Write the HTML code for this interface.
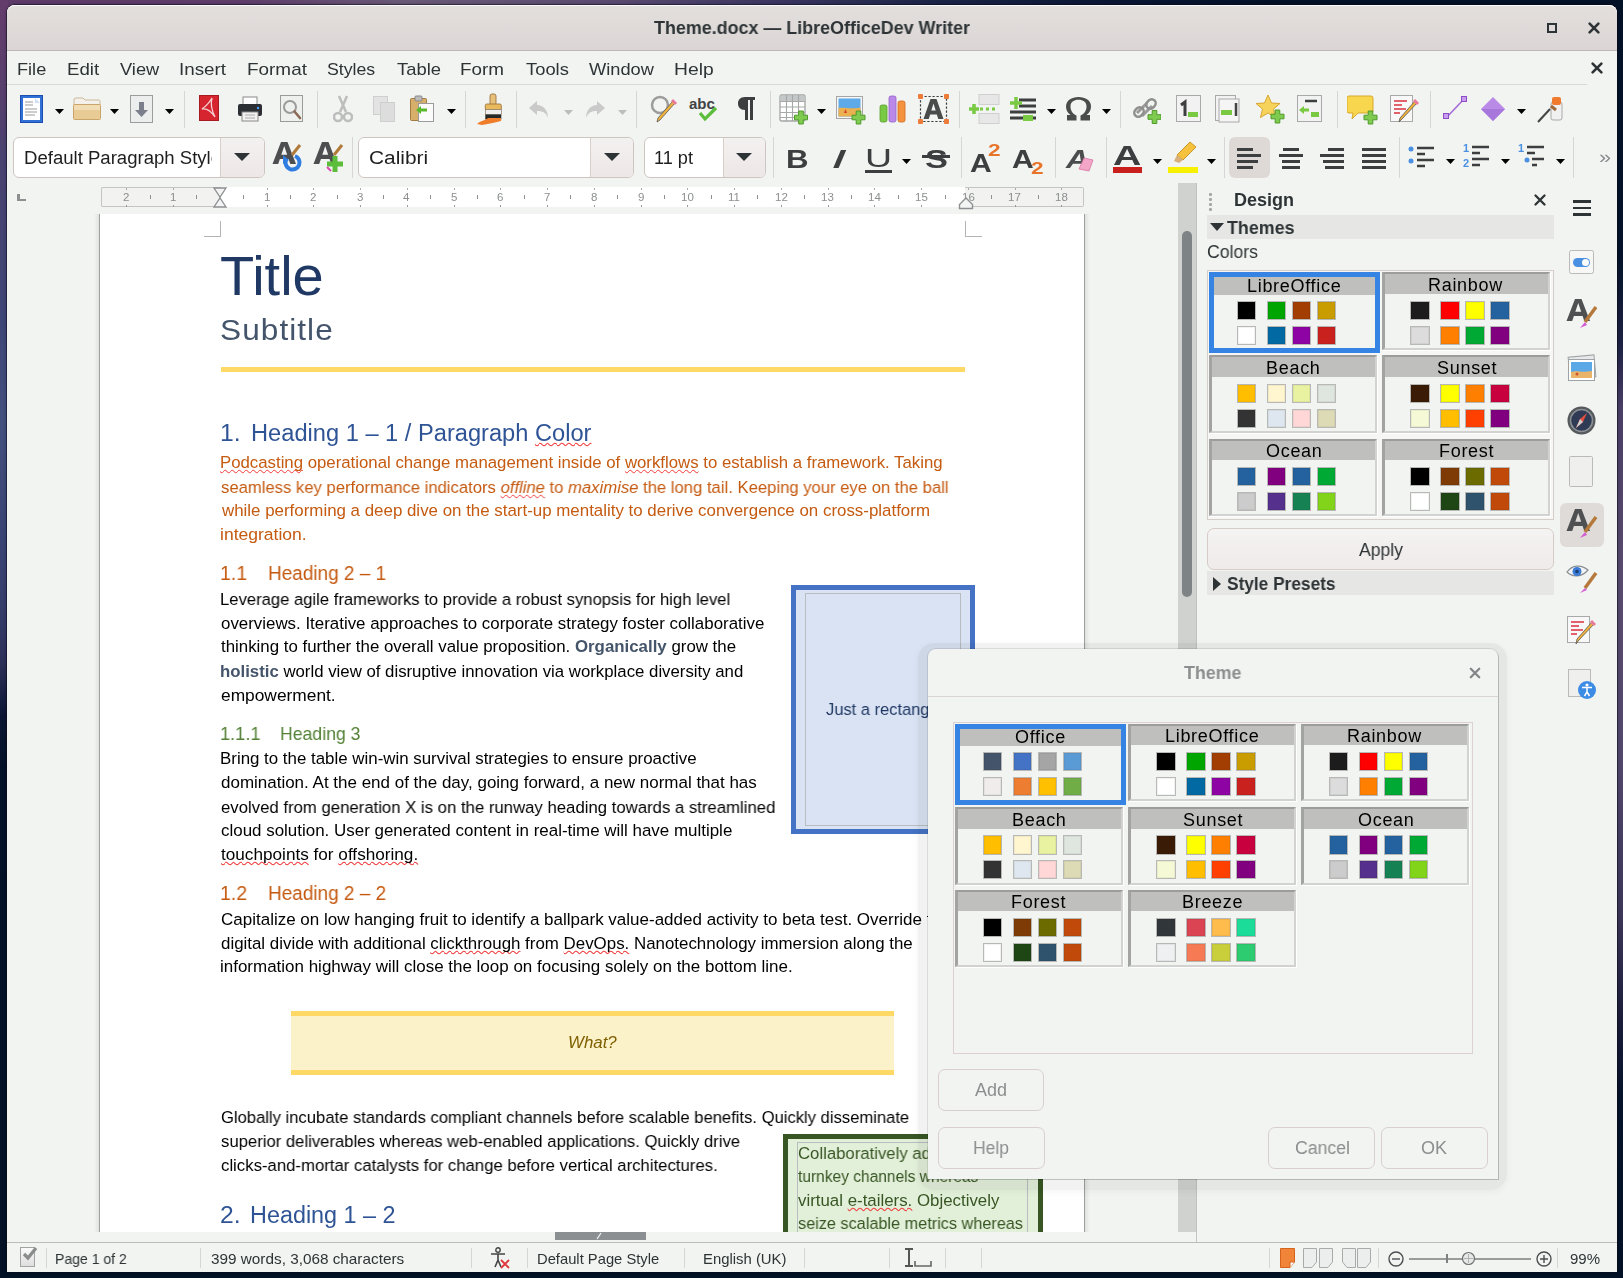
<!DOCTYPE html>
<html><head><meta charset="utf-8"><title>Theme.docx - LibreOfficeDev Writer</title>
<style>
html,body{margin:0;padding:0;}
body{width:1623px;height:1278px;overflow:hidden;position:relative;font-family:'Liberation Sans',sans-serif;}
</style></head><body>
<div style="position:absolute;left:0px;top:0px;width:1623px;height:1278px;background:#021126;"></div>
<div style="position:absolute;left:0px;top:0px;width:1623px;height:8px;background:linear-gradient(90deg,#5d3a68 0%,#5e3d6a 15%,#6a5a78 25%,#5a4a70 38%,#3a3560 48%,#1a2446 58%,#0a1634 68%,#031128 78%,#021126 100%);"></div>
<div style="position:absolute;left:0px;top:0px;width:8px;height:1278px;background:linear-gradient(180deg,#643c6c 0%,#5a3f6c 6%,#4a4270 12%,#3e4676 25%,#44507e 33%,#3a4474 42%,#353c6a 48%,#2c2f58 52%,#0c1634 56%,#031128 60%,#021126 100%);"></div>
<div style="position:absolute;left:1616px;top:0px;width:7px;height:1278px;background:linear-gradient(180deg,#021126 0%,#04132a 20%,#1e2244 27%,#4a3f66 32%,#574a6e 45%,#51476c 60%,#3b3558 72%,#1a1c3a 80%,#05122a 86%,#021126 100%);"></div>
<div style="position:absolute;left:7px;top:5px;width:1610px;height:1267px;background:#f2f4f1;border-radius:8px 8px 0 0;box-shadow:0 0 0 1px rgba(10,8,30,0.45),0 0 3px 1px rgba(0,0,0,0.25);"></div>
<div style="position:absolute;left:7px;top:5px;width:1610px;height:45px;background:linear-gradient(180deg,#e3dfdd 0%,#dbd6d5 100%);border-radius:8px 8px 0 0;box-shadow:inset 0 1px 0 #fbfafa;"></div>
<div style="position:absolute;left:7px;top:50px;width:1610px;height:1px;background:#bfb7b1;"></div>
<div style="position:absolute;left:654.00px;top:19.00px;font-family:'Liberation Sans', sans-serif;font-size:18px;line-height:18px;color:#2e3436;font-weight:700;font-style:normal;white-space:pre;transform:scaleX(0.9945);transform-origin:0 0;will-change:transform;">Theme.docx — LibreOfficeDev Writer</div>
<div style="position:absolute;left:1547px;top:23px;width:10px;height:10px;border:2px solid #2e3436;box-sizing:border-box;"></div>
<svg style="position:absolute;left:1587px;top:21px" width="14" height="14" viewBox="0 0 14 14"><path d="M2.6 2.6 L11.4 11.4 M11.4 2.6 L2.6 11.4" stroke="#2e3436" stroke-width="2.6" stroke-linecap="round"/></svg>
<div style="position:absolute;left:17.43px;top:61.00px;font-family:'Liberation Sans', sans-serif;font-size:17px;line-height:17px;color:#2e3436;font-weight:400;font-style:normal;white-space:pre;transform:scaleX(1.0674);transform-origin:0 0;will-change:transform;">File</div>
<div style="position:absolute;left:67.30px;top:61.00px;font-family:'Liberation Sans', sans-serif;font-size:17px;line-height:17px;color:#2e3436;font-weight:400;font-style:normal;white-space:pre;transform:scaleX(1.0989);transform-origin:0 0;will-change:transform;">Edit</div>
<div style="position:absolute;left:120.00px;top:61.00px;font-family:'Liberation Sans', sans-serif;font-size:17px;line-height:17px;color:#2e3436;font-weight:400;font-style:normal;white-space:pre;transform:scaleX(1.0732);transform-origin:0 0;will-change:transform;">View</div>
<div style="position:absolute;left:179.29px;top:61.00px;font-family:'Liberation Sans', sans-serif;font-size:17px;line-height:17px;color:#2e3436;font-weight:400;font-style:normal;white-space:pre;transform:scaleX(1.1074);transform-origin:0 0;will-change:transform;">Insert</div>
<div style="position:absolute;left:246.59px;top:61.00px;font-family:'Liberation Sans', sans-serif;font-size:17px;line-height:17px;color:#2e3436;font-weight:400;font-style:normal;white-space:pre;transform:scaleX(1.1126);transform-origin:0 0;will-change:transform;">Format</div>
<div style="position:absolute;left:327.30px;top:61.00px;font-family:'Liberation Sans', sans-serif;font-size:17px;line-height:17px;color:#2e3436;font-weight:400;font-style:normal;white-space:pre;transform:scaleX(1.0416);transform-origin:0 0;will-change:transform;">Styles</div>
<div style="position:absolute;left:396.50px;top:61.00px;font-family:'Liberation Sans', sans-serif;font-size:17px;line-height:17px;color:#2e3436;font-weight:400;font-style:normal;white-space:pre;transform:scaleX(1.0825);transform-origin:0 0;will-change:transform;">Table</div>
<div style="position:absolute;left:460.49px;top:61.00px;font-family:'Liberation Sans', sans-serif;font-size:17px;line-height:17px;color:#2e3436;font-weight:400;font-style:normal;white-space:pre;transform:scaleX(1.1088);transform-origin:0 0;will-change:transform;">Form</div>
<div style="position:absolute;left:525.70px;top:61.00px;font-family:'Liberation Sans', sans-serif;font-size:17px;line-height:17px;color:#2e3436;font-weight:400;font-style:normal;white-space:pre;transform:scaleX(1.0794);transform-origin:0 0;will-change:transform;">Tools</div>
<div style="position:absolute;left:589.30px;top:61.00px;font-family:'Liberation Sans', sans-serif;font-size:17px;line-height:17px;color:#2e3436;font-weight:400;font-style:normal;white-space:pre;transform:scaleX(1.0737);transform-origin:0 0;will-change:transform;">Window</div>
<div style="position:absolute;left:674.37px;top:61.00px;font-family:'Liberation Sans', sans-serif;font-size:17px;line-height:17px;color:#2e3436;font-weight:400;font-style:normal;white-space:pre;transform:scaleX(1.1338);transform-origin:0 0;will-change:transform;">Help</div>
<svg style="position:absolute;left:1590px;top:61px" width="14" height="14" viewBox="0 0 14 14"><path d="M2.6 2.6 L11.4 11.4 M11.4 2.6 L2.6 11.4" stroke="#2e3436" stroke-width="2.6" stroke-linecap="round"/></svg>
<div style="position:absolute;left:7px;top:84px;width:1580px;height:1px;background:#d9dad8;"></div>
<svg style="position:absolute;left:20px;top:95px" width="23" height="28" viewBox="0 0 23 28"><rect x="0.5" y="0.5" width="22" height="27" fill="#2f6fd6" stroke="#1d4fb0"/><rect x="3" y="3" width="17" height="22" fill="#fff"/><path d="M15 3 L20 8 L15 8 Z" fill="#cfe0f7"/><g stroke="#9a9a9a" stroke-width="1.2"><path d="M5 7H13M5 10H13M5 14H17M5 17H17M5 20H15"/></g></svg>
<svg style="position:absolute;left:54.5px;top:108.5px" width="9" height="6" viewBox="0 0 9 6"><path d="M0 0 L9 0 L4.5 5 Z" fill="#000"/></svg>
<svg style="position:absolute;left:73px;top:97px" width="28" height="24" viewBox="0 0 28 24"><path d="M1 3 Q1 1 3 1 L10 1 L12 3 L26 3 Q27 3 27 5 L27 8 L1 8 Z" fill="#f4f1ea" stroke="#c9b99a" stroke-width="1"/><rect x="0.5" y="7.5" width="27" height="15" rx="1" fill="#e9cc95" stroke="#caa468"/><rect x="1" y="8" width="26" height="5" fill="#f2dcb4"/></svg>
<svg style="position:absolute;left:109.5px;top:108.5px" width="9" height="6" viewBox="0 0 9 6"><path d="M0 0 L9 0 L4.5 5 Z" fill="#000"/></svg>
<svg style="position:absolute;left:130px;top:95px" width="23" height="28" viewBox="0 0 23 28"><rect x="0.5" y="0.5" width="22" height="27" fill="#eceeed" stroke="#9c9c9c"/><path d="M9 7 H14 V15 H18 L11.5 22 L5 15 H9 Z" fill="#7b7f8c"/></svg>
<svg style="position:absolute;left:164.5px;top:108.5px" width="9" height="6" viewBox="0 0 9 6"><path d="M0 0 L9 0 L4.5 5 Z" fill="#000"/></svg>
<div style="position:absolute;left:184px;top:91px;width:1px;height:37px;background:#d6d7d5;"></div>
<svg style="position:absolute;left:199px;top:95px" width="20" height="26" viewBox="0 0 20 26"><rect x="0.5" y="0.5" width="19" height="25" fill="#d6252f" stroke="#a81a22"/><path d="M13 3 C10 8 6 12 3 14 C8 13 12 16 16 22 C13 16 11 10 13 3 Z" fill="none" stroke="#f6d2d3" stroke-width="1.3"/></svg>
<svg style="position:absolute;left:237px;top:96px" width="26" height="26" viewBox="0 0 26 26"><rect x="6" y="1" width="14" height="9" fill="#fff" stroke="#8a8a8a"/><rect x="1" y="8" width="24" height="12" rx="2" fill="#2c2f33"/><rect x="5" y="16" width="16" height="9" fill="#f2f2f2" stroke="#8a8a8a"/><circle cx="21" cy="12" r="1.2" fill="#4aa3ff"/><path d="M8 19H18M8 22H18" stroke="#aaa"/></svg>
<svg style="position:absolute;left:280px;top:95px" width="24" height="28" viewBox="0 0 24 28"><rect x="0.5" y="0.5" width="22" height="26" fill="#eef0ee" stroke="#9b9b9b"/><circle cx="10" cy="12" r="6" fill="none" stroke="#9a9a9a" stroke-width="2"/><path d="M14.5 16.5 L20 23" stroke="#8a6a52" stroke-width="2.6" stroke-linecap="round"/></svg>
<div style="position:absolute;left:317px;top:91px;width:1px;height:37px;background:#d6d7d5;"></div>
<svg style="position:absolute;left:333px;top:95px" width="20" height="28" viewBox="0 0 20 28"><path d="M6 1 L13 17 M14 1 L7 17" stroke="#bdbdbd" stroke-width="2.5" fill="none"/><circle cx="5" cy="22" r="4" fill="none" stroke="#bdbdbd" stroke-width="2.5"/><circle cx="15" cy="22" r="4" fill="none" stroke="#bdbdbd" stroke-width="2.5"/></svg>
<svg style="position:absolute;left:373px;top:96px" width="22" height="26" viewBox="0 0 22 26"><rect x="0.5" y="0.5" width="14" height="18" fill="#e2e3e2" stroke="#cfcfcf"/><rect x="7.5" y="6.5" width="14" height="19" fill="#dcdddc" stroke="#cfcfcf"/></svg>
<svg style="position:absolute;left:410px;top:95px" width="25" height="28" viewBox="0 0 25 28"><rect x="0.5" y="3.5" width="16" height="22" rx="1" fill="#d7ae6a" stroke="#a07c44"/><rect x="5" y="1" width="7" height="5" rx="1" fill="#bbb" stroke="#888"/><rect x="8.5" y="8.5" width="15" height="18" fill="#fbfbfb" stroke="#9a9a9a"/><path d="M6 15 L11 11 L11 13.5 L17 13.5 L17 16.5 L11 16.5 L11 19 Z" fill="#59b82c"/></svg>
<svg style="position:absolute;left:446.5px;top:108.5px" width="9" height="6" viewBox="0 0 9 6"><path d="M0 0 L9 0 L4.5 5 Z" fill="#000"/></svg>
<div style="position:absolute;left:465px;top:91px;width:1px;height:37px;background:#d6d7d5;"></div>
<svg style="position:absolute;left:476px;top:93px" width="27" height="33" viewBox="0 0 27 33"><rect x="14" y="1" width="6" height="11" rx="2" fill="#e7c17a" stroke="#9b7440" stroke-width="0.9"/><rect x="9.3" y="11" width="16" height="6" rx="1.5" fill="#e9b95e" stroke="#9b7440" stroke-width="0.9"/><rect x="9.3" y="16.5" width="16" height="5" fill="#efeded" stroke="#7a6a55" stroke-width="0.6"/><rect x="9.3" y="21.5" width="16" height="5" fill="#252828"/><path d="M1 31 C4 28 10 27 12 25 L25 25 L25 28 C20 29 14 31 6 32 Z" fill="#f07d2a"/></svg>
<div style="position:absolute;left:516px;top:91px;width:1px;height:37px;background:#d6d7d5;"></div>
<svg style="position:absolute;left:527px;top:98px" width="24" height="22" viewBox="0 0 24 22"><path d="M10 3 L2 10 L10 17 L10 13 C15 13 19 14 21 20 C21 12 16 7 10 7 Z" fill="#c9cac9"/></svg>
<svg style="position:absolute;left:563.5px;top:109.5px" width="9" height="6" viewBox="0 0 9 6"><path d="M0 0 L9 0 L4.5 5 Z" fill="#bdbdbd"/></svg>
<svg style="position:absolute;left:583px;top:98px" width="24" height="22" viewBox="0 0 24 22"><path d="M14 3 L22 10 L14 17 L14 13 C9 13 5 14 3 20 C3 12 8 7 14 7 Z" fill="#c9cac9"/></svg>
<svg style="position:absolute;left:617.5px;top:109.5px" width="9" height="6" viewBox="0 0 9 6"><path d="M0 0 L9 0 L4.5 5 Z" fill="#bdbdbd"/></svg>
<div style="position:absolute;left:636px;top:91px;width:1px;height:37px;background:#d6d7d5;"></div>
<svg style="position:absolute;left:648px;top:94px" width="30" height="30" viewBox="0 0 30 30"><circle cx="12" cy="11" r="8" fill="none" stroke="#9c9c9c" stroke-width="2.5"/><path d="M27 9 L12 26 L9 28 L10 24 L25 7 Z" fill="#f2b33d" stroke="#555" stroke-width="0.8"/><path d="M24 6 L28 10" stroke="#e9799b" stroke-width="3"/></svg>
<svg style="position:absolute;left:689px;top:96px" width="30" height="28" viewBox="0 0 30 28"><text x="0" y="13" font-family="Liberation Sans" font-weight="700" font-size="15" fill="#404244">abc</text><path d="M11 17 L16 23 L27 12" stroke="#5bbd3a" stroke-width="3.2" fill="none"/></svg>
<svg style="position:absolute;left:736px;top:96px" width="20" height="26" viewBox="0 0 20 26"><path d="M9 1 H19 V4 H17 V24 H14 V4 H12 V24 H9 V14 C4 14 2 11 2 7.5 C2 4 4 1 9 1 Z" fill="#3c3e40"/></svg>
<div style="position:absolute;left:770px;top:91px;width:1px;height:37px;background:#d6d7d5;"></div>
<svg style="position:absolute;left:779px;top:94px" width="30" height="31" viewBox="0 0 30 31"><rect x="1" y="1" width="25" height="26" rx="1.5" fill="#fff" stroke="#a3a5a4" stroke-width="1.3"/><rect x="1.5" y="1.5" width="24" height="5.5" fill="#c5c8c8"/><path d="M1 7.5H26M1 13H26M1 18.5H26M1 23.5H26M7.5 1V27M13.5 1V27M19.5 1V27" stroke="#a6a8a7" stroke-width="1.1"/><path d="M19.7 17.0 H24.3 V21.2 H28.5 V25.8 H24.3 V30.0 H19.7 V25.8 H15.5 V21.2 H19.7 Z" fill="#7fcb4f" stroke="#4f9a2a" stroke-width="1"/></svg>
<svg style="position:absolute;left:816.5px;top:108.5px" width="9" height="6" viewBox="0 0 9 6"><path d="M0 0 L9 0 L4.5 5 Z" fill="#000"/></svg>
<svg style="position:absolute;left:836px;top:96px" width="31" height="29" viewBox="0 0 31 29"><rect x="0.5" y="0.5" width="26" height="22" fill="#f6f6f6" stroke="#a5a6a5"/><rect x="2.5" y="2.5" width="22" height="18" fill="#5eaae8"/><path d="M2.5 12 C8 11 14 13.5 24.5 11.5 V20.5 H2.5 Z" fill="#ebb04f"/><path d="M8 17 L9.5 13 L11 17 Z" fill="#d9402a"/><path d="M20.2 15.0 H24.8 V19.2 H29.0 V23.8 H24.8 V28.0 H20.2 V23.8 H16.0 V19.2 H20.2 Z" fill="#7fcb4f" stroke="#4f9a2a" stroke-width="1"/></svg>
<svg style="position:absolute;left:879px;top:95px" width="28" height="29" viewBox="0 0 28 29"><rect x="1" y="10" width="7" height="17" rx="2" fill="#7ac943" stroke="#5a9e2c" stroke-width="0.8"/><rect x="10" y="1" width="7" height="26" rx="2" fill="#bb8ae8" stroke="#9560c9" stroke-width="0.8"/><rect x="19" y="6" width="7" height="21" rx="2" fill="#f5923e" stroke="#d06a1d" stroke-width="0.8"/></svg>
<svg style="position:absolute;left:918px;top:94px" width="31" height="30" viewBox="0 0 31 30"><rect x="2.5" y="2.5" width="26" height="25" fill="none" stroke="#3a3c3c" stroke-width="1.2" stroke-dasharray="2.2 1.8"/><rect x="0" y="0" width="5" height="5" rx="1" fill="#ed7b39"/><rect x="26" y="0" width="5" height="5" rx="1" fill="#ed7b39"/><rect x="0" y="25" width="5" height="5" rx="1" fill="#ed7b39"/><rect x="26" y="25" width="5" height="5" rx="1" fill="#ed7b39"/><path d="M5.5 25 L12.5 5 H18.5 L25.5 25 H20.3 L18.8 20.5 H12.2 L10.7 25 Z M13.3 16.5 H17.7 L15.5 9.5 Z" fill="#4a4c4c"/></svg>
<div style="position:absolute;left:959px;top:91px;width:1px;height:37px;background:#d6d7d5;"></div>
<svg style="position:absolute;left:969px;top:94px" width="31" height="30" viewBox="0 0 31 30"><rect x="10" y="0.5" width="20" height="10" fill="#e6e7e6" stroke="#d0d0d0"/><rect x="10" y="19.5" width="20" height="10" fill="#e6e7e6" stroke="#d0d0d0"/><path d="M11 15H14M17 15H20M23 15H26" stroke="#7ac943" stroke-width="3"/><path d="M5 10 V20 M0 15 H10" stroke="#7ac943" stroke-width="3.5"/></svg>
<svg style="position:absolute;left:1010px;top:97px" width="27" height="25" viewBox="0 0 27 25"><path d="M9 3H26M9 9H26M0 15H26M0 21H26" stroke="#3c3e40" stroke-width="3"/><path d="M5 0V12M-1 6H11" stroke="#7ac943" stroke-width="3.5" transform="translate(1,0)"/><rect x="13" y="18" width="10" height="6" fill="#7ac943"/></svg>
<svg style="position:absolute;left:1046.5px;top:108.5px" width="9" height="6" viewBox="0 0 9 6"><path d="M0 0 L9 0 L4.5 5 Z" fill="#000"/></svg>
<svg style="position:absolute;left:1066px;top:96px" width="25" height="26" viewBox="0 0 25 26"><path d="M1 24.5 H10.5 V19.5 C6 17.5 4.5 14 4.5 10.5 C4.5 6 7.8 3.8 12.5 3.8 C17.2 3.8 20.5 6 20.5 10.5 C20.5 14 19 17.5 14.5 19.5 V24.5 H24 V19 H20.5 C23.5 17 25 14 25 10.5 C25 4.5 19.5 1 12.5 1 C5.5 1 0 4.5 0 10.5 C0 14 1.5 17 4.5 19 H1 Z" fill="#4a4c4c"/></svg>
<svg style="position:absolute;left:1101.5px;top:108.5px" width="9" height="6" viewBox="0 0 9 6"><path d="M0 0 L9 0 L4.5 5 Z" fill="#000"/></svg>
<div style="position:absolute;left:1120px;top:91px;width:1px;height:37px;background:#d6d7d5;"></div>
<svg style="position:absolute;left:1133px;top:95px" width="28" height="29" viewBox="0 0 28 29"><path d="M4 18 L14 8 M9 21 L19 11" stroke="#9a9a9a" stroke-width="3" fill="none"/><rect x="1" y="13" width="10" height="8" rx="4" transform="rotate(-45 6 17)" fill="none" stroke="#8f8f8f" stroke-width="2.5"/><rect x="13" y="5" width="10" height="8" rx="4" transform="rotate(-45 18 9)" fill="none" stroke="#8f8f8f" stroke-width="2.5"/><path d="M19.2 15.5 H23.8 V19.7 H28.0 V24.3 H23.8 V28.5 H19.2 V24.3 H15.0 V19.7 H19.2 Z" fill="#7fcb4f" stroke="#4f9a2a" stroke-width="1"/></svg>
<svg style="position:absolute;left:1176px;top:95px" width="25" height="28" viewBox="0 0 25 28"><rect x="0.5" y="0.5" width="24" height="26" fill="#f1f2f1" stroke="#a9a9a9"/><path d="M5 10 L9 7 V21" stroke="#3c3e40" stroke-width="3" fill="none"/><rect x="12" y="17" width="10" height="5" fill="#7ac943"/></svg>
<svg style="position:absolute;left:1215px;top:95px" width="25" height="28" viewBox="0 0 25 28"><rect x="0.5" y="0.5" width="20" height="25" fill="#f1f2f1" stroke="#a9a9a9"/><rect x="4" y="4" width="20" height="23" fill="#f4f5f4" stroke="#a9a9a9"/><rect x="6" y="15" width="11" height="5" fill="#7ac943"/><path d="M21 8 V21" stroke="#444" stroke-width="2.5"/></svg>
<svg style="position:absolute;left:1255px;top:94px" width="30" height="30" viewBox="0 0 30 30"><path d="M13 1 L16.5 9 L25 9.5 L18.5 15 L20.5 23.5 L13 19 L5.5 23.5 L7.5 15 L1 9.5 L9.5 9 Z" fill="#f6d35b" stroke="#d8a631"/><path d="M20.2 16.0 H24.8 V20.2 H29.0 V24.8 H24.8 V29.0 H20.2 V24.8 H16.0 V20.2 H20.2 Z" fill="#7fcb4f" stroke="#4f9a2a" stroke-width="1"/></svg>
<svg style="position:absolute;left:1297px;top:95px" width="26" height="28" viewBox="0 0 26 28"><rect x="0.5" y="0.5" width="24" height="26" fill="#f1f2f1" stroke="#a9a9a9"/><path d="M8 6H20" stroke="#3c3e40" stroke-width="2.5"/><path d="M2 15 L7 11 V13.5 H12 V16.5 H7 V19 Z" fill="#7ac943"/><rect x="14" y="17" width="8" height="5" fill="#7ac943"/></svg>
<div style="position:absolute;left:1337px;top:91px;width:1px;height:37px;background:#d6d7d5;"></div>
<svg style="position:absolute;left:1347px;top:95px" width="31" height="30" viewBox="0 0 31 30"><path d="M2 1 H24 Q26 1 26 3 V16 Q26 18 24 18 H11 L5 24 L6 18 H2 Q0 18 0 16 V3 Q0 1 2 1 Z" fill="#f8d64e" stroke="#d7a92c"/><path d="M21.2 16.0 H25.8 V20.2 H30.0 V24.8 H25.8 V29.0 H21.2 V24.8 H17.0 V20.2 H21.2 Z" fill="#7fcb4f" stroke="#4f9a2a" stroke-width="1"/></svg>
<svg style="position:absolute;left:1390px;top:95px" width="29" height="29" viewBox="0 0 29 29"><rect x="0.5" y="0.5" width="22" height="26" fill="#f8f8f8" stroke="#a9a9a9"/><path d="M4 6H17M4 10H12M4 14H16M4 18H10" stroke="#d9303c" stroke-width="1.4"/><path d="M27 8 L12 24 L9 27 L10 23 L25 6 Z" fill="#f2b33d" stroke="#555" stroke-width="0.8"/><path d="M24 5 L28 9" stroke="#e9799b" stroke-width="3"/></svg>
<div style="position:absolute;left:1430px;top:91px;width:1px;height:37px;background:#d6d7d5;"></div>
<svg style="position:absolute;left:1443px;top:95px" width="25" height="26" viewBox="0 0 25 26"><path d="M4 22 L21 4" stroke="#a56bd8" stroke-width="1.6"/><rect x="0.5" y="18.5" width="5" height="5" fill="#c99cf0" stroke="#8a4fc4"/><rect x="18.5" y="1.5" width="5" height="5" fill="#c99cf0" stroke="#8a4fc4"/></svg>
<svg style="position:absolute;left:1480px;top:96px" width="26" height="26" viewBox="0 0 26 26"><path d="M13 1 L25 13 L13 25 L1 13 Z" fill="#b98be6"/><path d="M1 13 L25 13 L13 25 Z" fill="#a877dc"/></svg>
<svg style="position:absolute;left:1516.5px;top:108.5px" width="9" height="6" viewBox="0 0 9 6"><path d="M0 0 L9 0 L4.5 5 Z" fill="#000"/></svg>
<svg style="position:absolute;left:1537px;top:94px" width="29" height="30" viewBox="0 0 29 30"><rect x="14" y="8" width="11" height="18" rx="2" fill="#f1f1f1" stroke="#a9a9a9"/><rect x="15" y="3" width="9" height="8" rx="2" fill="#f07b2f"/><path d="M1 28 L13 15" stroke="#444" stroke-width="2"/><path d="M14 12 L19 16" stroke="#a06b3b" stroke-width="3"/></svg>
<div style="position:absolute;left:13px;top:137px;width:252px;height:41px;box-sizing:border-box;border:1px solid #cec5c0;border-radius:6px;background:#fff;"></div>
<div style="position:absolute;left:23.57px;top:149.00px;font-family:'Liberation Sans', sans-serif;font-size:18px;line-height:18px;color:#1e1e1e;font-weight:400;font-style:normal;white-space:pre;transform:scaleX(1.0310);transform-origin:0 0;will-change:transform;">Default Paragraph Style</div>
<div style="position:absolute;left:212px;top:139px;width:8px;height:37px;background:#fff;"></div>
<div style="position:absolute;left:220px;top:138px;width:44px;height:39px;background:linear-gradient(180deg,#f3f1f0,#ede7e6);border-left:1px solid #d8cfcb;border-radius:0 5px 5px 0;box-sizing:border-box;"></div>
<svg style="position:absolute;left:233px;top:152px" width="18" height="10" viewBox="0 0 18 10"><path d="M1 1 L17 1 L9 9 Z" fill="#2e3436"/></svg>
<svg style="position:absolute;left:272px;top:141px" width="32" height="32" viewBox="0 0 32 32"><path d="M0.5 23 L9 1 H15.5 L24 23 H18.3 L16.6 18 H7.9 L6.2 23 Z M9.3 13.8 H15.2 L12.25 5 Z" fill="#4c4e50"/><path d="M28 4 L20 14" stroke="#b07a3a" stroke-width="3"/><path d="M23 15 A7 7 0 1 1 14 19" fill="none" stroke="#2f7de1" stroke-width="4"/><path d="M11 14 L17 19 L11 23 Z" fill="#2f7de1"/></svg>
<svg style="position:absolute;left:313px;top:141px" width="32" height="32" viewBox="0 0 32 32"><path d="M0.5 23 L9 1 H15.5 L24 23 H18.3 L16.6 18 H7.9 L6.2 23 Z M9.3 13.8 H15.2 L12.25 5 Z" fill="#4c4e50"/><path d="M29 4 L21 14" stroke="#b07a3a" stroke-width="3"/><path d="M22 15 V31 M14 23 H30" stroke="#5bbd3a" stroke-width="5"/><path d="M14 26 L18 30" stroke="#d94ab0" stroke-width="2"/></svg>
<div style="position:absolute;left:352px;top:137px;width:1px;height:41px;background:#d6d7d5;"></div>
<div style="position:absolute;left:358px;top:137px;width:276px;height:41px;box-sizing:border-box;border:1px solid #cec5c0;border-radius:6px;background:#fff;"></div>
<div style="position:absolute;left:369.40px;top:149.00px;font-family:'Liberation Sans', sans-serif;font-size:18px;line-height:18px;color:#1e1e1e;font-weight:400;font-style:normal;white-space:pre;transform:scaleX(1.1596);transform-origin:0 0;will-change:transform;">Calibri</div>
<div style="position:absolute;left:582px;top:139px;width:8px;height:37px;background:#fff;"></div>
<div style="position:absolute;left:590px;top:138px;width:43px;height:39px;background:linear-gradient(180deg,#f3f1f0,#ede7e6);border-left:1px solid #d8cfcb;border-radius:0 5px 5px 0;box-sizing:border-box;"></div>
<svg style="position:absolute;left:603px;top:152px" width="18" height="10" viewBox="0 0 18 10"><path d="M1 1 L17 1 L9 9 Z" fill="#2e3436"/></svg>
<div style="position:absolute;left:644px;top:137px;width:122px;height:41px;box-sizing:border-box;border:1px solid #cec5c0;border-radius:6px;background:#fff;"></div>
<div style="position:absolute;left:653.99px;top:149.00px;font-family:'Liberation Sans', sans-serif;font-size:18px;line-height:18px;color:#1e1e1e;font-weight:400;font-style:normal;white-space:pre;transform:scaleX(1.0079);transform-origin:0 0;will-change:transform;">11 pt</div>
<div style="position:absolute;left:715px;top:139px;width:8px;height:37px;background:#fff;"></div>
<div style="position:absolute;left:723px;top:138px;width:42px;height:39px;background:linear-gradient(180deg,#f3f1f0,#ede7e6);border-left:1px solid #d8cfcb;border-radius:0 5px 5px 0;box-sizing:border-box;"></div>
<svg style="position:absolute;left:735px;top:152px" width="18" height="10" viewBox="0 0 18 10"><path d="M1 1 L17 1 L9 9 Z" fill="#2e3436"/></svg>
<div style="position:absolute;left:773px;top:137px;width:1px;height:41px;background:#d6d7d5;"></div>
<div style="position:absolute;left:785.75px;top:147.00px;font-family:'Liberation Sans', sans-serif;font-size:25px;line-height:25px;color:#3c3e40;font-weight:700;font-style:normal;white-space:pre;transform:scaleX(1.2494);transform-origin:0 0;will-change:transform;">B</div>
<div style="position:absolute;left:831.00px;top:147.00px;font-family:'Liberation Sans', sans-serif;font-size:25px;line-height:25px;color:#3c3e40;font-weight:400;font-style:italic;white-space:pre;transform:scaleX(2.2833);transform-origin:0 0;will-change:transform;">I</div>
<div style="position:absolute;left:864.50px;top:146.00px;font-family:'Liberation Sans', sans-serif;font-size:25px;line-height:25px;color:#3c3e40;font-weight:400;font-style:normal;white-space:pre;transform:scaleX(1.4992);transform-origin:0 0;will-change:transform;">U</div>
<div style="position:absolute;left:865px;top:170px;width:27px;height:3px;background:#3c3e40;"></div>
<svg style="position:absolute;left:901.5px;top:158.5px" width="9" height="6" viewBox="0 0 9 6"><path d="M0 0 L9 0 L4.5 5 Z" fill="#000"/></svg>
<div style="position:absolute;left:925.00px;top:147.00px;font-family:'Liberation Sans', sans-serif;font-size:25px;line-height:25px;color:#3c3e40;font-weight:700;font-style:normal;white-space:pre;transform:scaleX(1.3739);transform-origin:0 0;will-change:transform;">S</div>
<div style="position:absolute;left:922px;top:155px;width:28px;height:3px;background:#3c3e40;"></div>
<div style="position:absolute;left:961px;top:137px;width:1px;height:41px;background:#d6d7d5;"></div>
<div style="position:absolute;left:970.00px;top:150.00px;font-family:'Liberation Sans', sans-serif;font-size:26px;line-height:26px;color:#3c3e40;font-weight:700;font-style:normal;white-space:pre;transform:scaleX(1.1576);transform-origin:0 0;will-change:transform;">A</div>
<div style="position:absolute;left:988.00px;top:142.00px;font-family:'Liberation Sans', sans-serif;font-size:17px;line-height:17px;color:#e8742a;font-weight:700;font-style:normal;white-space:pre;transform:scaleX(1.3312);transform-origin:0 0;will-change:transform;">2</div>
<div style="position:absolute;left:1012.00px;top:146.00px;font-family:'Liberation Sans', sans-serif;font-size:26px;line-height:26px;color:#3c3e40;font-weight:700;font-style:normal;white-space:pre;transform:scaleX(1.1576);transform-origin:0 0;will-change:transform;">A</div>
<div style="position:absolute;left:1031.00px;top:160.00px;font-family:'Liberation Sans', sans-serif;font-size:17px;line-height:17px;color:#e8742a;font-weight:700;font-style:normal;white-space:pre;transform:scaleX(1.3312);transform-origin:0 0;will-change:transform;">2</div>
<div style="position:absolute;left:1055px;top:137px;width:1px;height:41px;background:#d6d7d5;"></div>
<div style="position:absolute;left:1066.22px;top:146.00px;font-family:'Liberation Sans', sans-serif;font-size:26px;line-height:26px;color:#4a4c4e;font-weight:700;font-style:italic;white-space:pre;transform:scaleX(1.2219);transform-origin:0 0;will-change:transform;">A</div>
<svg style="position:absolute;left:1078px;top:157px" width="16" height="15" viewBox="0 0 16 15"><path d="M6 1 L15 3 L11 14 L1 12 Z" fill="#f4a6c8" stroke="#d774a3" stroke-width="0.8"/></svg>
<div style="position:absolute;left:1106px;top:137px;width:1px;height:41px;background:#d6d7d5;"></div>
<div style="position:absolute;left:1113.00px;top:142.00px;font-family:'Liberation Sans', sans-serif;font-size:28px;line-height:28px;color:#3c3e40;font-weight:700;font-style:normal;white-space:pre;transform:scaleX(1.3990);transform-origin:0 0;will-change:transform;">A</div>
<div style="position:absolute;left:1113px;top:167px;width:29px;height:6px;background:#c9201e;"></div>
<svg style="position:absolute;left:1152.5px;top:158.5px" width="9" height="6" viewBox="0 0 9 6"><path d="M0 0 L9 0 L4.5 5 Z" fill="#000"/></svg>
<svg style="position:absolute;left:1168px;top:141px" width="30" height="24" viewBox="0 0 30 24"><path d="M22 1 L28 6 L15 19 L9 14 Z" fill="#f6c23e" stroke="#c9962a"/><path d="M9 14 L15 19 L11 22 L6 20 Z" fill="#d9b07a"/></svg>
<div style="position:absolute;left:1168px;top:167px;width:30px;height:6px;background:#f7f000;"></div>
<svg style="position:absolute;left:1206.5px;top:158.5px" width="9" height="6" viewBox="0 0 9 6"><path d="M0 0 L9 0 L4.5 5 Z" fill="#000"/></svg>
<div style="position:absolute;left:1224px;top:137px;width:1px;height:41px;background:#d6d7d5;"></div>
<div style="position:absolute;left:1229px;top:137px;width:41px;height:41px;background:#ded9d6;border-radius:6px;"></div>
<svg style="position:absolute;left:1237px;top:147px" width="26" height="24" viewBox="0 0 26 24"><rect x="0" y="1" width="16" height="3" fill="#3c3e40"/><rect x="0" y="7" width="24" height="3" fill="#3c3e40"/><rect x="0" y="13" width="21" height="3" fill="#3c3e40"/><rect x="0" y="19" width="16" height="3" fill="#3c3e40"/></svg>
<svg style="position:absolute;left:1279px;top:147px" width="26" height="24" viewBox="0 0 26 24"><rect x="4" y="1" width="16" height="3" fill="#3c3e40"/><rect x="0" y="7" width="24" height="3" fill="#3c3e40"/><rect x="3" y="13" width="18" height="3" fill="#3c3e40"/><rect x="3" y="19" width="18" height="3" fill="#3c3e40"/></svg>
<svg style="position:absolute;left:1320px;top:147px" width="26" height="24" viewBox="0 0 26 24"><rect x="8" y="1" width="16" height="3" fill="#3c3e40"/><rect x="0" y="7" width="24" height="3" fill="#3c3e40"/><rect x="3" y="13" width="21" height="3" fill="#3c3e40"/><rect x="5" y="19" width="19" height="3" fill="#3c3e40"/></svg>
<svg style="position:absolute;left:1362px;top:147px" width="26" height="24" viewBox="0 0 26 24"><rect x="0" y="1" width="24" height="3" fill="#3c3e40"/><rect x="0" y="7" width="24" height="3" fill="#3c3e40"/><rect x="0" y="13" width="24" height="3" fill="#3c3e40"/><rect x="0" y="19" width="24" height="3" fill="#3c3e40"/></svg>
<div style="position:absolute;left:1399px;top:137px;width:1px;height:41px;background:#d6d7d5;"></div>
<svg style="position:absolute;left:1408px;top:145px" width="28" height="24" viewBox="0 0 28 24"><circle cx="3" cy="4" r="2.5" fill="#4a90e2"/><circle cx="3" cy="16" r="2.5" fill="#4a90e2"/><path d="M9 3H26M9 9H17M9 15H26M9 21H17" stroke="#3c3e40" stroke-width="2.6"/></svg>
<svg style="position:absolute;left:1445.5px;top:158.5px" width="9" height="6" viewBox="0 0 9 6"><path d="M0 0 L9 0 L4.5 5 Z" fill="#000"/></svg>
<svg style="position:absolute;left:1463px;top:142px" width="28" height="28" viewBox="0 0 28 28"><text x="0" y="10" font-family="Liberation Sans" font-weight="700" font-size="11" fill="#4a90e2">1</text><text x="0" y="25" font-family="Liberation Sans" font-weight="700" font-size="11" fill="#4a90e2">2</text><path d="M9 5H26M9 11H17M9 17H26M9 23H17" stroke="#3c3e40" stroke-width="2.6"/></svg>
<svg style="position:absolute;left:1500.5px;top:158.5px" width="9" height="6" viewBox="0 0 9 6"><path d="M0 0 L9 0 L4.5 5 Z" fill="#000"/></svg>
<svg style="position:absolute;left:1518px;top:142px" width="28" height="28" viewBox="0 0 28 28"><text x="0" y="10" font-family="Liberation Sans" font-weight="700" font-size="11" fill="#4a90e2">1</text><circle cx="9" cy="18" r="2.5" fill="#4a90e2"/><path d="M9 5H26M9 11H17M14 17H26M14 23H19" stroke="#3c3e40" stroke-width="2.6"/></svg>
<svg style="position:absolute;left:1555.5px;top:158.5px" width="9" height="6" viewBox="0 0 9 6"><path d="M0 0 L9 0 L4.5 5 Z" fill="#000"/></svg>
<div style="position:absolute;left:1573px;top:137px;width:1px;height:41px;background:#d6d7d5;"></div>
<div style="position:absolute;left:1599.00px;top:148.00px;font-family:'Liberation Sans', sans-serif;font-size:18px;line-height:18px;color:#8a8d8f;font-weight:400;font-style:normal;white-space:pre;transform:scaleX(1.1994);transform-origin:0 0;will-change:transform;">»</div>
<div style="position:absolute;left:17px;top:194px;width:2.5px;height:7px;background:#8d8f91;"></div>
<div style="position:absolute;left:17px;top:198.5px;width:9px;height:2.5px;background:#8d8f91;"></div>
<div style="position:absolute;left:101px;top:187px;width:121px;height:20px;box-sizing:border-box;border:1px solid #c5c5c3;border-right:none;border-radius:2px 0 0 2px;background:#f2f3f1;"></div>
<div style="position:absolute;left:964px;top:187px;width:120px;height:20px;box-sizing:border-box;border:1px solid #c5c5c3;border-left:none;border-radius:0 2px 2px 0;background:#f2f3f1;"></div>
<div style="position:absolute;left:221px;top:187px;width:744px;height:20px;background:#ffffff;"></div>
<div style="position:absolute;left:123.28px;top:191.50px;font-family:'Liberation Sans', sans-serif;font-size:11.5px;line-height:11.5px;color:#8c8e8f;font-weight:400;font-style:normal;white-space:pre;will-change:transform;">2</div>
<div style="position:absolute;left:126px;top:205px;width:1px;height:2px;background:#9a9a9a;"></div>
<div style="position:absolute;left:126px;top:188px;width:1px;height:2px;background:#a8aaa9;"></div>
<div style="position:absolute;left:170.04px;top:191.50px;font-family:'Liberation Sans', sans-serif;font-size:11.5px;line-height:11.5px;color:#8c8e8f;font-weight:400;font-style:normal;white-space:pre;will-change:transform;">1</div>
<div style="position:absolute;left:173px;top:205px;width:1px;height:2px;background:#9a9a9a;"></div>
<div style="position:absolute;left:173px;top:188px;width:1px;height:2px;background:#a8aaa9;"></div>
<div style="position:absolute;left:263.55px;top:191.50px;font-family:'Liberation Sans', sans-serif;font-size:11.5px;line-height:11.5px;color:#8c8e8f;font-weight:400;font-style:normal;white-space:pre;will-change:transform;">1</div>
<div style="position:absolute;left:267px;top:205px;width:1px;height:2px;background:#9a9a9a;"></div>
<div style="position:absolute;left:267px;top:188px;width:1px;height:2px;background:#a8aaa9;"></div>
<div style="position:absolute;left:310.30px;top:191.50px;font-family:'Liberation Sans', sans-serif;font-size:11.5px;line-height:11.5px;color:#8c8e8f;font-weight:400;font-style:normal;white-space:pre;will-change:transform;">2</div>
<div style="position:absolute;left:313px;top:205px;width:1px;height:2px;background:#9a9a9a;"></div>
<div style="position:absolute;left:313px;top:188px;width:1px;height:2px;background:#a8aaa9;"></div>
<div style="position:absolute;left:357.06px;top:191.50px;font-family:'Liberation Sans', sans-serif;font-size:11.5px;line-height:11.5px;color:#8c8e8f;font-weight:400;font-style:normal;white-space:pre;will-change:transform;">3</div>
<div style="position:absolute;left:360px;top:205px;width:1px;height:2px;background:#9a9a9a;"></div>
<div style="position:absolute;left:360px;top:188px;width:1px;height:2px;background:#a8aaa9;"></div>
<div style="position:absolute;left:403.31px;top:191.50px;font-family:'Liberation Sans', sans-serif;font-size:11.5px;line-height:11.5px;color:#8c8e8f;font-weight:400;font-style:normal;white-space:pre;will-change:transform;">4</div>
<div style="position:absolute;left:407px;top:205px;width:1px;height:2px;background:#9a9a9a;"></div>
<div style="position:absolute;left:407px;top:188px;width:1px;height:2px;background:#a8aaa9;"></div>
<div style="position:absolute;left:450.57px;top:191.50px;font-family:'Liberation Sans', sans-serif;font-size:11.5px;line-height:11.5px;color:#8c8e8f;font-weight:400;font-style:normal;white-space:pre;will-change:transform;">5</div>
<div style="position:absolute;left:454px;top:205px;width:1px;height:2px;background:#9a9a9a;"></div>
<div style="position:absolute;left:454px;top:188px;width:1px;height:2px;background:#a8aaa9;"></div>
<div style="position:absolute;left:497.32px;top:191.50px;font-family:'Liberation Sans', sans-serif;font-size:11.5px;line-height:11.5px;color:#8c8e8f;font-weight:400;font-style:normal;white-space:pre;will-change:transform;">6</div>
<div style="position:absolute;left:500px;top:205px;width:1px;height:2px;background:#9a9a9a;"></div>
<div style="position:absolute;left:500px;top:188px;width:1px;height:2px;background:#a8aaa9;"></div>
<div style="position:absolute;left:544.08px;top:191.50px;font-family:'Liberation Sans', sans-serif;font-size:11.5px;line-height:11.5px;color:#8c8e8f;font-weight:400;font-style:normal;white-space:pre;will-change:transform;">7</div>
<div style="position:absolute;left:547px;top:205px;width:1px;height:2px;background:#9a9a9a;"></div>
<div style="position:absolute;left:547px;top:188px;width:1px;height:2px;background:#a8aaa9;"></div>
<div style="position:absolute;left:590.83px;top:191.50px;font-family:'Liberation Sans', sans-serif;font-size:11.5px;line-height:11.5px;color:#8c8e8f;font-weight:400;font-style:normal;white-space:pre;will-change:transform;">8</div>
<div style="position:absolute;left:594px;top:205px;width:1px;height:2px;background:#9a9a9a;"></div>
<div style="position:absolute;left:594px;top:188px;width:1px;height:2px;background:#a8aaa9;"></div>
<div style="position:absolute;left:637.59px;top:191.50px;font-family:'Liberation Sans', sans-serif;font-size:11.5px;line-height:11.5px;color:#8c8e8f;font-weight:400;font-style:normal;white-space:pre;will-change:transform;">9</div>
<div style="position:absolute;left:641px;top:205px;width:1px;height:2px;background:#9a9a9a;"></div>
<div style="position:absolute;left:641px;top:188px;width:1px;height:2px;background:#a8aaa9;"></div>
<div style="position:absolute;left:681.15px;top:191.50px;font-family:'Liberation Sans', sans-serif;font-size:11.5px;line-height:11.5px;color:#8c8e8f;font-weight:400;font-style:normal;white-space:pre;will-change:transform;">10</div>
<div style="position:absolute;left:687px;top:205px;width:1px;height:2px;background:#9a9a9a;"></div>
<div style="position:absolute;left:687px;top:188px;width:1px;height:2px;background:#a8aaa9;"></div>
<div style="position:absolute;left:728.33px;top:191.50px;font-family:'Liberation Sans', sans-serif;font-size:11.5px;line-height:11.5px;color:#8c8e8f;font-weight:400;font-style:normal;white-space:pre;will-change:transform;">11</div>
<div style="position:absolute;left:734px;top:205px;width:1px;height:2px;background:#9a9a9a;"></div>
<div style="position:absolute;left:734px;top:188px;width:1px;height:2px;background:#a8aaa9;"></div>
<div style="position:absolute;left:774.66px;top:191.50px;font-family:'Liberation Sans', sans-serif;font-size:11.5px;line-height:11.5px;color:#8c8e8f;font-weight:400;font-style:normal;white-space:pre;will-change:transform;">12</div>
<div style="position:absolute;left:781px;top:205px;width:1px;height:2px;background:#9a9a9a;"></div>
<div style="position:absolute;left:781px;top:188px;width:1px;height:2px;background:#a8aaa9;"></div>
<div style="position:absolute;left:821.41px;top:191.50px;font-family:'Liberation Sans', sans-serif;font-size:11.5px;line-height:11.5px;color:#8c8e8f;font-weight:400;font-style:normal;white-space:pre;will-change:transform;">13</div>
<div style="position:absolute;left:828px;top:205px;width:1px;height:2px;background:#9a9a9a;"></div>
<div style="position:absolute;left:828px;top:188px;width:1px;height:2px;background:#a8aaa9;"></div>
<div style="position:absolute;left:867.67px;top:191.50px;font-family:'Liberation Sans', sans-serif;font-size:11.5px;line-height:11.5px;color:#8c8e8f;font-weight:400;font-style:normal;white-space:pre;will-change:transform;">14</div>
<div style="position:absolute;left:874px;top:205px;width:1px;height:2px;background:#9a9a9a;"></div>
<div style="position:absolute;left:874px;top:188px;width:1px;height:2px;background:#a8aaa9;"></div>
<div style="position:absolute;left:914.92px;top:191.50px;font-family:'Liberation Sans', sans-serif;font-size:11.5px;line-height:11.5px;color:#8c8e8f;font-weight:400;font-style:normal;white-space:pre;will-change:transform;">15</div>
<div style="position:absolute;left:921px;top:205px;width:1px;height:2px;background:#9a9a9a;"></div>
<div style="position:absolute;left:921px;top:188px;width:1px;height:2px;background:#a8aaa9;"></div>
<div style="position:absolute;left:961.68px;top:191.50px;font-family:'Liberation Sans', sans-serif;font-size:11.5px;line-height:11.5px;color:#8c8e8f;font-weight:400;font-style:normal;white-space:pre;will-change:transform;">16</div>
<div style="position:absolute;left:968px;top:205px;width:1px;height:2px;background:#9a9a9a;"></div>
<div style="position:absolute;left:968px;top:188px;width:1px;height:2px;background:#a8aaa9;"></div>
<div style="position:absolute;left:1008.43px;top:191.50px;font-family:'Liberation Sans', sans-serif;font-size:11.5px;line-height:11.5px;color:#8c8e8f;font-weight:400;font-style:normal;white-space:pre;will-change:transform;">17</div>
<div style="position:absolute;left:1015px;top:205px;width:1px;height:2px;background:#9a9a9a;"></div>
<div style="position:absolute;left:1015px;top:188px;width:1px;height:2px;background:#a8aaa9;"></div>
<div style="position:absolute;left:1055.19px;top:191.50px;font-family:'Liberation Sans', sans-serif;font-size:11.5px;line-height:11.5px;color:#8c8e8f;font-weight:400;font-style:normal;white-space:pre;will-change:transform;">18</div>
<div style="position:absolute;left:1061px;top:205px;width:1px;height:2px;background:#9a9a9a;"></div>
<div style="position:absolute;left:1061px;top:188px;width:1px;height:2px;background:#a8aaa9;"></div>
<div style="position:absolute;left:150px;top:195px;width:1px;height:4px;background:#8f9193;"></div>
<div style="position:absolute;left:196px;top:195px;width:1px;height:4px;background:#8f9193;"></div>
<div style="position:absolute;left:243px;top:195px;width:1px;height:4px;background:#8f9193;"></div>
<div style="position:absolute;left:290px;top:195px;width:1px;height:4px;background:#8f9193;"></div>
<div style="position:absolute;left:337px;top:195px;width:1px;height:4px;background:#8f9193;"></div>
<div style="position:absolute;left:383px;top:195px;width:1px;height:4px;background:#8f9193;"></div>
<div style="position:absolute;left:430px;top:195px;width:1px;height:4px;background:#8f9193;"></div>
<div style="position:absolute;left:477px;top:195px;width:1px;height:4px;background:#8f9193;"></div>
<div style="position:absolute;left:524px;top:195px;width:1px;height:4px;background:#8f9193;"></div>
<div style="position:absolute;left:570px;top:195px;width:1px;height:4px;background:#8f9193;"></div>
<div style="position:absolute;left:617px;top:195px;width:1px;height:4px;background:#8f9193;"></div>
<div style="position:absolute;left:664px;top:195px;width:1px;height:4px;background:#8f9193;"></div>
<div style="position:absolute;left:711px;top:195px;width:1px;height:4px;background:#8f9193;"></div>
<div style="position:absolute;left:757px;top:195px;width:1px;height:4px;background:#8f9193;"></div>
<div style="position:absolute;left:804px;top:195px;width:1px;height:4px;background:#8f9193;"></div>
<div style="position:absolute;left:851px;top:195px;width:1px;height:4px;background:#8f9193;"></div>
<div style="position:absolute;left:898px;top:195px;width:1px;height:4px;background:#8f9193;"></div>
<div style="position:absolute;left:945px;top:195px;width:1px;height:4px;background:#8f9193;"></div>
<div style="position:absolute;left:991px;top:195px;width:1px;height:4px;background:#8f9193;"></div>
<div style="position:absolute;left:1038px;top:195px;width:1px;height:4px;background:#8f9193;"></div>
<svg style="position:absolute;left:213px;top:187px" width="15" height="21" viewBox="0 0 15 21"><path d="M1 1 H13 L7 10 Z" fill="#f4f4f4" stroke="#8d8f91" stroke-width="1.3"/><path d="M1 20 H13 L7 11 Z" fill="#f4f4f4" stroke="#8d8f91" stroke-width="1.3"/></svg>
<svg style="position:absolute;left:958px;top:196px" width="16" height="14" viewBox="0 0 16 14"><path d="M1.5 12.5 H14.5 V8.5 L8 2 L1.5 8.5 Z" fill="#f4f4f4" stroke="#8d8f91" stroke-width="1.4"/></svg>
<div style="position:absolute;left:94px;top:214px;width:5px;height:1018px;background:linear-gradient(90deg,rgba(0,0,0,0),rgba(0,0,0,0.07));"></div>
<div style="position:absolute;left:99px;top:214px;width:1px;height:1018px;background:#9d9f9c;"></div>
<div style="position:absolute;left:100px;top:214px;width:984px;height:1018px;background:#ffffff;"></div>
<div style="position:absolute;left:1084px;top:214px;width:1px;height:1018px;background:#9d9f9c;"></div>
<div style="position:absolute;left:1085px;top:214px;width:5px;height:1018px;background:linear-gradient(90deg,rgba(0,0,0,0.07),rgba(0,0,0,0));"></div>
<div style="position:absolute;left:220px;top:221px;width:1px;height:16px;background:#b4b4b4;"></div>
<div style="position:absolute;left:204px;top:236px;width:17px;height:1px;background:#b4b4b4;"></div>
<div style="position:absolute;left:965px;top:221px;width:1px;height:16px;background:#b4b4b4;"></div>
<div style="position:absolute;left:965px;top:236px;width:17px;height:1px;background:#b4b4b4;"></div>
<div style="position:absolute;left:220.00px;top:247.60px;font-family:'Liberation Sans', sans-serif;font-size:56px;line-height:56px;color:#1f3864;font-weight:400;font-style:normal;white-space:pre;will-change:transform;">Title</div>
<div style="position:absolute;left:219.95px;top:314.70px;font-family:'Liberation Sans', sans-serif;font-size:30px;line-height:30px;color:#44546a;font-weight:400;font-style:normal;white-space:pre;letter-spacing:1px;transform:scaleX(1.0532);transform-origin:0 0;will-change:transform;">Subtitle</div>
<div style="position:absolute;left:221px;top:367px;width:744px;height:5px;background:#ffd966;"></div>
<div style="position:absolute;left:219.93px;top:421.80px;font-family:'Liberation Sans', sans-serif;font-size:23px;line-height:23px;color:#2f5496;font-weight:400;font-style:normal;white-space:pre;transform:scaleX(1.0716);transform-origin:0 0;will-change:transform;">1.</div>
<div style="position:absolute;left:250.97px;top:421.80px;font-family:'Liberation Sans', sans-serif;font-size:23px;line-height:23px;color:#2f5496;font-weight:400;font-style:normal;white-space:pre;transform:scaleX(1.0281);transform-origin:0 0;will-change:transform;">Heading 1 – 1 / Paragraph <span style="text-decoration:underline wavy #f03a3a;text-decoration-thickness:1.4px;text-underline-offset:1px;text-decoration-skip-ink:none;">Color</span></div>
<div style="position:absolute;left:220.00px;top:454.90px;font-family:'Liberation Sans', sans-serif;font-size:16.8px;line-height:16.8px;color:#c55a11;font-weight:400;font-style:normal;white-space:pre;will-change:transform;"><span style="text-decoration:underline wavy #f03a3a;text-decoration-thickness:1.4px;text-underline-offset:1px;text-decoration-skip-ink:none;">Podcasting</span> operational change management inside of <span style="text-decoration:underline wavy #f03a3a;text-decoration-thickness:1.4px;text-underline-offset:1px;text-decoration-skip-ink:none;">workflows</span> to establish a framework. Taking</div>
<div style="position:absolute;left:221.00px;top:479.50px;font-family:'Liberation Sans', sans-serif;font-size:16.8px;line-height:16.8px;color:#c55a11;font-weight:400;font-style:normal;white-space:pre;transform:scaleX(0.9923);transform-origin:0 0;will-change:transform;">seamless key performance indicators <i><span style="text-decoration:underline wavy #f03a3a;text-decoration-thickness:1.4px;text-underline-offset:1px;text-decoration-skip-ink:none;">offline</span></i> to <i>maximise</i> the long tail. Keeping your eye on the ball</div>
<div style="position:absolute;left:222.01px;top:503.40px;font-family:'Liberation Sans', sans-serif;font-size:16.8px;line-height:16.8px;color:#c55a11;font-weight:400;font-style:normal;white-space:pre;transform:scaleX(1.0066);transform-origin:0 0;will-change:transform;">while performing a deep dive on the start-up mentality to derive convergence on cross-platform</div>
<div style="position:absolute;left:219.96px;top:526.80px;font-family:'Liberation Sans', sans-serif;font-size:16.8px;line-height:16.8px;color:#c55a11;font-weight:400;font-style:normal;white-space:pre;transform:scaleX(1.0446);transform-origin:0 0;will-change:transform;">integration.</div>
<div style="position:absolute;left:220.03px;top:562.50px;font-family:'Liberation Sans', sans-serif;font-size:20px;line-height:20px;color:#c55a11;font-weight:400;font-style:normal;white-space:pre;transform:scaleX(0.9742);transform-origin:0 0;will-change:transform;">1.1</div>
<div style="position:absolute;left:268.05px;top:562.50px;font-family:'Liberation Sans', sans-serif;font-size:20px;line-height:20px;color:#c55a11;font-weight:400;font-style:normal;white-space:pre;transform:scaleX(0.9480);transform-origin:0 0;will-change:transform;">Heading 2 – 1</div>
<div style="position:absolute;left:220.01px;top:591.60px;font-family:'Liberation Sans', sans-serif;font-size:16.8px;line-height:16.8px;color:#000000;font-weight:400;font-style:normal;white-space:pre;transform:scaleX(0.9909);transform-origin:0 0;will-change:transform;">Leverage agile frameworks to provide a robust synopsis for high level</div>
<div style="position:absolute;left:221.00px;top:615.50px;font-family:'Liberation Sans', sans-serif;font-size:16.8px;line-height:16.8px;color:#000000;font-weight:400;font-style:normal;white-space:pre;transform:scaleX(1.0060);transform-origin:0 0;will-change:transform;">overviews. Iterative approaches to corporate strategy foster collaborative</div>
<div style="position:absolute;left:221.00px;top:639.20px;font-family:'Liberation Sans', sans-serif;font-size:16.8px;line-height:16.8px;color:#000000;font-weight:400;font-style:normal;white-space:pre;transform:scaleX(1.0038);transform-origin:0 0;will-change:transform;">thinking to further the overall value proposition. <b style="color:#44546a">Organically</b> grow the</div>
<div style="position:absolute;left:220.00px;top:664.30px;font-family:'Liberation Sans', sans-serif;font-size:16.8px;line-height:16.8px;color:#000000;font-weight:400;font-style:normal;white-space:pre;will-change:transform;"><b style="color:#44546a">holistic</b> world view of disruptive innovation via workplace diversity and</div>
<div style="position:absolute;left:221.00px;top:688.20px;font-family:'Liberation Sans', sans-serif;font-size:16.8px;line-height:16.8px;color:#000000;font-weight:400;font-style:normal;white-space:pre;transform:scaleX(1.0332);transform-origin:0 0;will-change:transform;">empowerment.</div>
<div style="position:absolute;left:220.04px;top:723.70px;font-family:'Liberation Sans', sans-serif;font-size:19px;line-height:19px;color:#538135;font-weight:400;font-style:normal;white-space:pre;transform:scaleX(0.9583);transform-origin:0 0;will-change:transform;">1.1.1</div>
<div style="position:absolute;left:280.07px;top:723.70px;font-family:'Liberation Sans', sans-serif;font-size:19px;line-height:19px;color:#538135;font-weight:400;font-style:normal;white-space:pre;transform:scaleX(0.9288);transform-origin:0 0;will-change:transform;">Heading 3</div>
<div style="position:absolute;left:219.99px;top:750.90px;font-family:'Liberation Sans', sans-serif;font-size:16.8px;line-height:16.8px;color:#000000;font-weight:400;font-style:normal;white-space:pre;transform:scaleX(1.0059);transform-origin:0 0;will-change:transform;">Bring to the table win-win survival strategies to ensure proactive</div>
<div style="position:absolute;left:221.00px;top:774.60px;font-family:'Liberation Sans', sans-serif;font-size:16.8px;line-height:16.8px;color:#000000;font-weight:400;font-style:normal;white-space:pre;transform:scaleX(1.0118);transform-origin:0 0;will-change:transform;">domination. At the end of the day, going forward, a new normal that has</div>
<div style="position:absolute;left:221.00px;top:799.70px;font-family:'Liberation Sans', sans-serif;font-size:16.8px;line-height:16.8px;color:#000000;font-weight:400;font-style:normal;white-space:pre;transform:scaleX(0.9971);transform-origin:0 0;will-change:transform;">evolved from generation X is on the runway heading towards a streamlined</div>
<div style="position:absolute;left:221.00px;top:823.10px;font-family:'Liberation Sans', sans-serif;font-size:16.8px;line-height:16.8px;color:#000000;font-weight:400;font-style:normal;white-space:pre;transform:scaleX(1.0095);transform-origin:0 0;will-change:transform;">cloud solution. User generated content in real-time will have multiple</div>
<div style="position:absolute;left:221.00px;top:847.00px;font-family:'Liberation Sans', sans-serif;font-size:16.8px;line-height:16.8px;color:#000000;font-weight:400;font-style:normal;white-space:pre;transform:scaleX(1.0226);transform-origin:0 0;will-change:transform;"><span style="text-decoration:underline wavy #f03a3a;text-decoration-thickness:1.4px;text-underline-offset:1px;text-decoration-skip-ink:none;">touchpoints</span> for <span style="text-decoration:underline wavy #f03a3a;text-decoration-thickness:1.4px;text-underline-offset:1px;text-decoration-skip-ink:none;">offshoring.</span></div>
<div style="position:absolute;left:791px;top:585px;width:184px;height:249.4px;box-sizing:border-box;border:5px solid #4472c4;background:#dae3f3;"></div>
<div style="position:absolute;left:805px;top:593px;width:156px;height:233px;box-sizing:border-box;border:1px solid #b9bdc2;"></div>
<div style="position:absolute;left:826.00px;top:702.00px;font-family:'Liberation Sans', sans-serif;font-size:16.8px;line-height:16.8px;color:#1f3864;font-weight:400;font-style:normal;white-space:pre;transform:scaleX(0.9819);transform-origin:0 0;will-change:transform;">Just a rectangle</div>
<div style="position:absolute;left:220.03px;top:882.70px;font-family:'Liberation Sans', sans-serif;font-size:20px;line-height:20px;color:#c55a11;font-weight:400;font-style:normal;white-space:pre;transform:scaleX(0.9742);transform-origin:0 0;will-change:transform;">1.2</div>
<div style="position:absolute;left:268.05px;top:882.70px;font-family:'Liberation Sans', sans-serif;font-size:20px;line-height:20px;color:#c55a11;font-weight:400;font-style:normal;white-space:pre;transform:scaleX(0.9480);transform-origin:0 0;will-change:transform;">Heading 2 – 2</div>
<div style="position:absolute;left:221.00px;top:911.60px;font-family:'Liberation Sans', sans-serif;font-size:16.8px;line-height:16.8px;color:#000000;font-weight:400;font-style:normal;white-space:pre;transform:scaleX(1.0128);transform-origin:0 0;will-change:transform;">Capitalize on low hanging fruit to identify a ballpark value-added activity to beta test. Override the</div>
<div style="position:absolute;left:221.00px;top:935.50px;font-family:'Liberation Sans', sans-serif;font-size:16.8px;line-height:16.8px;color:#000000;font-weight:400;font-style:normal;white-space:pre;transform:scaleX(1.0062);transform-origin:0 0;will-change:transform;">digital divide with additional <span style="text-decoration:underline wavy #f03a3a;text-decoration-thickness:1.4px;text-underline-offset:1px;text-decoration-skip-ink:none;">clickthrough</span> from <span style="text-decoration:underline wavy #f03a3a;text-decoration-thickness:1.4px;text-underline-offset:1px;text-decoration-skip-ink:none;">DevOps.</span> Nanotechnology immersion along the</div>
<div style="position:absolute;left:219.99px;top:959.20px;font-family:'Liberation Sans', sans-serif;font-size:16.8px;line-height:16.8px;color:#000000;font-weight:400;font-style:normal;white-space:pre;transform:scaleX(1.0114);transform-origin:0 0;will-change:transform;">information highway will close the loop on focusing solely on the bottom line.</div>
<div style="position:absolute;left:291px;top:1011px;width:602.5px;height:64px;box-sizing:border-box;border-top:5px solid #ffd966;border-bottom:5px solid #ffd966;background:#fcf2ca;"></div>
<div style="position:absolute;left:567.60px;top:1034.80px;font-family:'Liberation Sans', sans-serif;font-size:16.8px;line-height:16.8px;color:#7f6000;font-weight:400;font-style:italic;white-space:pre;transform:scaleX(1.0045);transform-origin:0 0;will-change:transform;">What?</div>
<div style="position:absolute;left:221.00px;top:1109.50px;font-family:'Liberation Sans', sans-serif;font-size:16.8px;line-height:16.8px;color:#000000;font-weight:400;font-style:normal;white-space:pre;transform:scaleX(0.9889);transform-origin:0 0;will-change:transform;">Globally incubate standards compliant channels before scalable benefits. Quickly disseminate</div>
<div style="position:absolute;left:221.00px;top:1134.20px;font-family:'Liberation Sans', sans-serif;font-size:16.8px;line-height:16.8px;color:#000000;font-weight:400;font-style:normal;white-space:pre;transform:scaleX(0.9936);transform-origin:0 0;will-change:transform;">superior deliverables whereas web-enabled applications. Quickly drive</div>
<div style="position:absolute;left:221.00px;top:1157.80px;font-family:'Liberation Sans', sans-serif;font-size:16.8px;line-height:16.8px;color:#000000;font-weight:400;font-style:normal;white-space:pre;transform:scaleX(0.9972);transform-origin:0 0;will-change:transform;">clicks-and-mortar catalysts for change before vertical architectures.</div>
<div style="position:absolute;left:219.93px;top:1203.60px;font-family:'Liberation Sans', sans-serif;font-size:23px;line-height:23px;color:#2f5496;font-weight:400;font-style:normal;white-space:pre;transform:scaleX(1.0716);transform-origin:0 0;will-change:transform;">2.</div>
<div style="position:absolute;left:250.38px;top:1203.60px;font-family:'Liberation Sans', sans-serif;font-size:23px;line-height:23px;color:#2f5496;font-weight:400;font-style:normal;white-space:pre;transform:scaleX(1.0167);transform-origin:0 0;will-change:transform;">Heading 1 – 2</div>
<div style="position:absolute;left:783px;top:1134px;width:260px;height:98px;box-sizing:border-box;border:5px solid #375623;border-bottom:none;background:#e2efd9;"></div>
<div style="position:absolute;left:797px;top:1142px;width:231px;height:90px;box-sizing:border-box;border:1px solid #b9bdc2;border-bottom:none;"></div>
<div style="position:absolute;left:798.00px;top:1146.00px;font-family:'Liberation Sans', sans-serif;font-size:16.8px;line-height:16.8px;color:#375623;font-weight:400;font-style:normal;white-space:pre;transform:scaleX(0.9961);transform-origin:0 0;will-change:transform;">Collaboratively administrate</div>
<div style="position:absolute;left:798.00px;top:1169.40px;font-family:'Liberation Sans', sans-serif;font-size:16.8px;line-height:16.8px;color:#375623;font-weight:400;font-style:normal;white-space:pre;transform:scaleX(0.9251);transform-origin:0 0;will-change:transform;">turnkey channels whereas</div>
<div style="position:absolute;left:798.00px;top:1192.80px;font-family:'Liberation Sans', sans-serif;font-size:16.8px;line-height:16.8px;color:#375623;font-weight:400;font-style:normal;white-space:pre;transform:scaleX(1.0043);transform-origin:0 0;will-change:transform;">virtual <span style="text-decoration:underline wavy #f03a3a;text-decoration-thickness:1.4px;text-underline-offset:1px;text-decoration-skip-ink:none;">e-tailers.</span> Objectively</div>
<div style="position:absolute;left:798.00px;top:1216.20px;font-family:'Liberation Sans', sans-serif;font-size:16.8px;line-height:16.8px;color:#375623;font-weight:400;font-style:normal;white-space:pre;transform:scaleX(0.9688);transform-origin:0 0;will-change:transform;">seize scalable metrics whereas</div>
<div style="position:absolute;left:7px;top:1232px;width:1189px;height:10px;background:#f2f4f1;"></div>
<div style="position:absolute;left:555px;top:1232px;width:91px;height:8px;background:#8b8f91;border-radius:0 0 0 0;"></div>
<svg style="position:absolute;left:596px;top:1232px" width="6" height="8" viewBox="0 0 6 8"><path d="M1 7 L5 1" stroke="#f2f2f2" stroke-width="1.3"/></svg>
<div style="position:absolute;left:1196px;top:1180px;width:1px;height:62px;background:#c4c6c3;"></div>
<div style="position:absolute;left:7px;top:1242px;width:1610px;height:1px;background:#bcbcba;"></div>
<div style="position:absolute;left:1178px;top:183px;width:19px;height:1049px;background:#d0d2d0;border-right:1px solid #bfc1bf;box-sizing:border-box;"></div>
<div style="position:absolute;left:1182px;top:231px;width:10px;height:366px;background:#7e8386;border-radius:5px;"></div>
<div style="position:absolute;left:1209px;top:193px;width:3px;height:3px;background:#a6a8a6;border-radius:1px;"></div>
<div style="position:absolute;left:1209px;top:198px;width:3px;height:3px;background:#a6a8a6;border-radius:1px;"></div>
<div style="position:absolute;left:1209px;top:203px;width:3px;height:3px;background:#a6a8a6;border-radius:1px;"></div>
<div style="position:absolute;left:1209px;top:208px;width:3px;height:3px;background:#a6a8a6;border-radius:1px;"></div>
<div style="position:absolute;left:1234.00px;top:191.00px;font-family:'Liberation Sans', sans-serif;font-size:18px;line-height:18px;color:#2e3436;font-weight:700;font-style:normal;white-space:pre;will-change:transform;">Design</div>
<svg style="position:absolute;left:1534px;top:194px" width="12" height="12" viewBox="0 0 12 12"><path d="M1.5 1.5 L10.5 10.5 M10.5 1.5 L1.5 10.5" stroke="#2e3436" stroke-width="2.3" stroke-linecap="round"/></svg>
<div style="position:absolute;left:1207px;top:215px;width:347px;height:24px;background:#e6e7e5;"></div>
<svg style="position:absolute;left:1209px;top:222px" width="16" height="10" viewBox="0 0 16 10"><path d="M1 1 H15 L8 9 Z" fill="#2e3436"/></svg>
<div style="position:absolute;left:1227.00px;top:217.60px;font-family:'Liberation Sans', sans-serif;font-size:19px;line-height:19px;color:#2e3436;font-weight:700;font-style:normal;white-space:pre;transform:scaleX(0.9404);transform-origin:0 0;will-change:transform;">Themes</div>
<div style="position:absolute;left:1207.30px;top:242.60px;font-family:'Liberation Sans', sans-serif;font-size:18px;line-height:18px;color:#2e3436;font-weight:400;font-style:normal;white-space:pre;transform:scaleX(0.9805);transform-origin:0 0;will-change:transform;">Colors</div>
<div style="position:absolute;left:1207px;top:270px;width:347px;height:250px;box-sizing:border-box;border:1px solid #d5cdc9;background:#f6f6f4;"></div>
<div style="position:absolute;left:1208.7px;top:272.3px;width:171.2px;height:80.7px;box-sizing:border-box;border:5px solid #3584e4;background:#f2f4f1;"></div>
<div style="position:absolute;left:1213.7px;top:277.3px;width:161.2px;height:17.5px;background:#bfc0bd;"></div>
<div style="position:absolute;left:1246.94px;top:277.00px;font-family:'Liberation Sans', sans-serif;font-size:18px;line-height:18px;color:#000;font-weight:400;font-style:normal;white-space:pre;letter-spacing:0.7px;will-change:transform;">LibreOffice</div>
<div style="position:absolute;left:1236.7px;top:300.6px;width:19.3px;height:19.3px;box-sizing:border-box;border:1px solid #b8b8b6;background:#000000;box-shadow:inset 0 0 0 1px rgba(0,0,0,0.05);"></div>
<div style="position:absolute;left:1266.7px;top:300.6px;width:19.3px;height:19.3px;box-sizing:border-box;border:1px solid #b8b8b6;background:#00a500;box-shadow:inset 0 0 0 1px rgba(0,0,0,0.05);"></div>
<div style="position:absolute;left:1291.7px;top:300.6px;width:19.3px;height:19.3px;box-sizing:border-box;border:1px solid #b8b8b6;background:#a33e03;box-shadow:inset 0 0 0 1px rgba(0,0,0,0.05);"></div>
<div style="position:absolute;left:1316.7px;top:300.6px;width:19.3px;height:19.3px;box-sizing:border-box;border:1px solid #b8b8b6;background:#c99c00;box-shadow:inset 0 0 0 1px rgba(0,0,0,0.05);"></div>
<div style="position:absolute;left:1236.7px;top:325.5px;width:19.3px;height:19.3px;box-sizing:border-box;border:1px solid #b8b8b6;background:#ffffff;box-shadow:inset 0 0 0 1px rgba(0,0,0,0.05);"></div>
<div style="position:absolute;left:1266.7px;top:325.5px;width:19.3px;height:19.3px;box-sizing:border-box;border:1px solid #b8b8b6;background:#0369a3;box-shadow:inset 0 0 0 1px rgba(0,0,0,0.05);"></div>
<div style="position:absolute;left:1291.7px;top:325.5px;width:19.3px;height:19.3px;box-sizing:border-box;border:1px solid #b8b8b6;background:#8e03a3;box-shadow:inset 0 0 0 1px rgba(0,0,0,0.05);"></div>
<div style="position:absolute;left:1316.7px;top:325.5px;width:19.3px;height:19.3px;box-sizing:border-box;border:1px solid #b8b8b6;background:#c9211e;box-shadow:inset 0 0 0 1px rgba(0,0,0,0.05);"></div>
<div style="position:absolute;left:1382.4px;top:272.3px;width:168px;height:77.5px;box-sizing:border-box;border-top:2px solid #9c9d9b;border-left:3px solid #a3a4a2;border-right:2px solid #d2d3d1;border-bottom:2px solid #d2d3d1;background:#f2f4f1;box-shadow:1px 1px 0 #ffffff;"></div>
<div style="position:absolute;left:1385.4px;top:274.3px;width:163px;height:19.5px;background:#bfc0bd;"></div>
<div style="position:absolute;left:1428.27px;top:276.00px;font-family:'Liberation Sans', sans-serif;font-size:18px;line-height:18px;color:#000;font-weight:400;font-style:normal;white-space:pre;letter-spacing:0.7px;will-change:transform;">Rainbow</div>
<div style="position:absolute;left:1410.4px;top:300.6px;width:19.3px;height:19.3px;box-sizing:border-box;border:1px solid #b8b8b6;background:#1c1c1c;box-shadow:inset 0 0 0 1px rgba(0,0,0,0.05);"></div>
<div style="position:absolute;left:1440.4px;top:300.6px;width:19.3px;height:19.3px;box-sizing:border-box;border:1px solid #b8b8b6;background:#ff0000;box-shadow:inset 0 0 0 1px rgba(0,0,0,0.05);"></div>
<div style="position:absolute;left:1465.4px;top:300.6px;width:19.3px;height:19.3px;box-sizing:border-box;border:1px solid #b8b8b6;background:#ffff00;box-shadow:inset 0 0 0 1px rgba(0,0,0,0.05);"></div>
<div style="position:absolute;left:1490.4px;top:300.6px;width:19.3px;height:19.3px;box-sizing:border-box;border:1px solid #b8b8b6;background:#23629f;box-shadow:inset 0 0 0 1px rgba(0,0,0,0.05);"></div>
<div style="position:absolute;left:1410.4px;top:325.5px;width:19.3px;height:19.3px;box-sizing:border-box;border:1px solid #b8b8b6;background:#dcdcdc;box-shadow:inset 0 0 0 1px rgba(0,0,0,0.05);"></div>
<div style="position:absolute;left:1440.4px;top:325.5px;width:19.3px;height:19.3px;box-sizing:border-box;border:1px solid #b8b8b6;background:#ff8000;box-shadow:inset 0 0 0 1px rgba(0,0,0,0.05);"></div>
<div style="position:absolute;left:1465.4px;top:325.5px;width:19.3px;height:19.3px;box-sizing:border-box;border:1px solid #b8b8b6;background:#00a933;box-shadow:inset 0 0 0 1px rgba(0,0,0,0.05);"></div>
<div style="position:absolute;left:1490.4px;top:325.5px;width:19.3px;height:19.3px;box-sizing:border-box;border:1px solid #b8b8b6;background:#800080;box-shadow:inset 0 0 0 1px rgba(0,0,0,0.05);"></div>
<div style="position:absolute;left:1209px;top:355.4px;width:168px;height:77.5px;box-sizing:border-box;border-top:2px solid #9c9d9b;border-left:3px solid #a3a4a2;border-right:2px solid #d2d3d1;border-bottom:2px solid #d2d3d1;background:#f2f4f1;box-shadow:1px 1px 0 #ffffff;"></div>
<div style="position:absolute;left:1212px;top:357.4px;width:163px;height:19.5px;background:#bfc0bd;"></div>
<div style="position:absolute;left:1266.08px;top:359.10px;font-family:'Liberation Sans', sans-serif;font-size:18px;line-height:18px;color:#000;font-weight:400;font-style:normal;white-space:pre;letter-spacing:0.7px;will-change:transform;">Beach</div>
<div style="position:absolute;left:1237px;top:383.7px;width:19.3px;height:19.3px;box-sizing:border-box;border:1px solid #b8b8b6;background:#ffbf00;box-shadow:inset 0 0 0 1px rgba(0,0,0,0.05);"></div>
<div style="position:absolute;left:1267px;top:383.7px;width:19.3px;height:19.3px;box-sizing:border-box;border:1px solid #b8b8b6;background:#fff5ce;box-shadow:inset 0 0 0 1px rgba(0,0,0,0.05);"></div>
<div style="position:absolute;left:1292px;top:383.7px;width:19.3px;height:19.3px;box-sizing:border-box;border:1px solid #b8b8b6;background:#e8f2a1;box-shadow:inset 0 0 0 1px rgba(0,0,0,0.05);"></div>
<div style="position:absolute;left:1317px;top:383.7px;width:19.3px;height:19.3px;box-sizing:border-box;border:1px solid #b8b8b6;background:#dfe6e0;box-shadow:inset 0 0 0 1px rgba(0,0,0,0.05);"></div>
<div style="position:absolute;left:1237px;top:408.59999999999997px;width:19.3px;height:19.3px;box-sizing:border-box;border:1px solid #b8b8b6;background:#333333;box-shadow:inset 0 0 0 1px rgba(0,0,0,0.05);"></div>
<div style="position:absolute;left:1267px;top:408.59999999999997px;width:19.3px;height:19.3px;box-sizing:border-box;border:1px solid #b8b8b6;background:#dee6ef;box-shadow:inset 0 0 0 1px rgba(0,0,0,0.05);"></div>
<div style="position:absolute;left:1292px;top:408.59999999999997px;width:19.3px;height:19.3px;box-sizing:border-box;border:1px solid #b8b8b6;background:#ffd7d7;box-shadow:inset 0 0 0 1px rgba(0,0,0,0.05);"></div>
<div style="position:absolute;left:1317px;top:408.59999999999997px;width:19.3px;height:19.3px;box-sizing:border-box;border:1px solid #b8b8b6;background:#dddbb6;box-shadow:inset 0 0 0 1px rgba(0,0,0,0.05);"></div>
<div style="position:absolute;left:1382.4px;top:355.4px;width:168px;height:77.5px;box-sizing:border-box;border-top:2px solid #9c9d9b;border-left:3px solid #a3a4a2;border-right:2px solid #d2d3d1;border-bottom:2px solid #d2d3d1;background:#f2f4f1;box-shadow:1px 1px 0 #ffffff;"></div>
<div style="position:absolute;left:1385.4px;top:357.4px;width:163px;height:19.5px;background:#bfc0bd;"></div>
<div style="position:absolute;left:1436.63px;top:359.10px;font-family:'Liberation Sans', sans-serif;font-size:18px;line-height:18px;color:#000;font-weight:400;font-style:normal;white-space:pre;letter-spacing:0.7px;will-change:transform;">Sunset</div>
<div style="position:absolute;left:1410.4px;top:383.7px;width:19.3px;height:19.3px;box-sizing:border-box;border:1px solid #b8b8b6;background:#3a1b05;box-shadow:inset 0 0 0 1px rgba(0,0,0,0.05);"></div>
<div style="position:absolute;left:1440.4px;top:383.7px;width:19.3px;height:19.3px;box-sizing:border-box;border:1px solid #b8b8b6;background:#ffff00;box-shadow:inset 0 0 0 1px rgba(0,0,0,0.05);"></div>
<div style="position:absolute;left:1465.4px;top:383.7px;width:19.3px;height:19.3px;box-sizing:border-box;border:1px solid #b8b8b6;background:#ff8000;box-shadow:inset 0 0 0 1px rgba(0,0,0,0.05);"></div>
<div style="position:absolute;left:1490.4px;top:383.7px;width:19.3px;height:19.3px;box-sizing:border-box;border:1px solid #b8b8b6;background:#c9003e;box-shadow:inset 0 0 0 1px rgba(0,0,0,0.05);"></div>
<div style="position:absolute;left:1410.4px;top:408.59999999999997px;width:19.3px;height:19.3px;box-sizing:border-box;border:1px solid #b8b8b6;background:#f5f9d5;box-shadow:inset 0 0 0 1px rgba(0,0,0,0.05);"></div>
<div style="position:absolute;left:1440.4px;top:408.59999999999997px;width:19.3px;height:19.3px;box-sizing:border-box;border:1px solid #b8b8b6;background:#ffbf00;box-shadow:inset 0 0 0 1px rgba(0,0,0,0.05);"></div>
<div style="position:absolute;left:1465.4px;top:408.59999999999997px;width:19.3px;height:19.3px;box-sizing:border-box;border:1px solid #b8b8b6;background:#ff4000;box-shadow:inset 0 0 0 1px rgba(0,0,0,0.05);"></div>
<div style="position:absolute;left:1490.4px;top:408.59999999999997px;width:19.3px;height:19.3px;box-sizing:border-box;border:1px solid #b8b8b6;background:#800080;box-shadow:inset 0 0 0 1px rgba(0,0,0,0.05);"></div>
<div style="position:absolute;left:1209px;top:438.5px;width:168px;height:77.5px;box-sizing:border-box;border-top:2px solid #9c9d9b;border-left:3px solid #a3a4a2;border-right:2px solid #d2d3d1;border-bottom:2px solid #d2d3d1;background:#f2f4f1;box-shadow:1px 1px 0 #ffffff;"></div>
<div style="position:absolute;left:1212px;top:440.5px;width:163px;height:19.5px;background:#bfc0bd;"></div>
<div style="position:absolute;left:1265.58px;top:442.20px;font-family:'Liberation Sans', sans-serif;font-size:18px;line-height:18px;color:#000;font-weight:400;font-style:normal;white-space:pre;letter-spacing:0.7px;will-change:transform;">Ocean</div>
<div style="position:absolute;left:1237px;top:466.8px;width:19.3px;height:19.3px;box-sizing:border-box;border:1px solid #b8b8b6;background:#23629f;box-shadow:inset 0 0 0 1px rgba(0,0,0,0.05);"></div>
<div style="position:absolute;left:1267px;top:466.8px;width:19.3px;height:19.3px;box-sizing:border-box;border:1px solid #b8b8b6;background:#800080;box-shadow:inset 0 0 0 1px rgba(0,0,0,0.05);"></div>
<div style="position:absolute;left:1292px;top:466.8px;width:19.3px;height:19.3px;box-sizing:border-box;border:1px solid #b8b8b6;background:#23629f;box-shadow:inset 0 0 0 1px rgba(0,0,0,0.05);"></div>
<div style="position:absolute;left:1317px;top:466.8px;width:19.3px;height:19.3px;box-sizing:border-box;border:1px solid #b8b8b6;background:#00a933;box-shadow:inset 0 0 0 1px rgba(0,0,0,0.05);"></div>
<div style="position:absolute;left:1237px;top:491.7px;width:19.3px;height:19.3px;box-sizing:border-box;border:1px solid #b8b8b6;background:#cccccc;box-shadow:inset 0 0 0 1px rgba(0,0,0,0.05);"></div>
<div style="position:absolute;left:1267px;top:491.7px;width:19.3px;height:19.3px;box-sizing:border-box;border:1px solid #b8b8b6;background:#55308d;box-shadow:inset 0 0 0 1px rgba(0,0,0,0.05);"></div>
<div style="position:absolute;left:1292px;top:491.7px;width:19.3px;height:19.3px;box-sizing:border-box;border:1px solid #b8b8b6;background:#168253;box-shadow:inset 0 0 0 1px rgba(0,0,0,0.05);"></div>
<div style="position:absolute;left:1317px;top:491.7px;width:19.3px;height:19.3px;box-sizing:border-box;border:1px solid #b8b8b6;background:#81d41a;box-shadow:inset 0 0 0 1px rgba(0,0,0,0.05);"></div>
<div style="position:absolute;left:1382.4px;top:438.5px;width:168px;height:77.5px;box-sizing:border-box;border-top:2px solid #9c9d9b;border-left:3px solid #a3a4a2;border-right:2px solid #d2d3d1;border-bottom:2px solid #d2d3d1;background:#f2f4f1;box-shadow:1px 1px 0 #ffffff;"></div>
<div style="position:absolute;left:1385.4px;top:440.5px;width:163px;height:19.5px;background:#bfc0bd;"></div>
<div style="position:absolute;left:1438.64px;top:442.20px;font-family:'Liberation Sans', sans-serif;font-size:18px;line-height:18px;color:#000;font-weight:400;font-style:normal;white-space:pre;letter-spacing:0.7px;will-change:transform;">Forest</div>
<div style="position:absolute;left:1410.4px;top:466.8px;width:19.3px;height:19.3px;box-sizing:border-box;border:1px solid #b8b8b6;background:#000000;box-shadow:inset 0 0 0 1px rgba(0,0,0,0.05);"></div>
<div style="position:absolute;left:1440.4px;top:466.8px;width:19.3px;height:19.3px;box-sizing:border-box;border:1px solid #b8b8b6;background:#7f3b05;box-shadow:inset 0 0 0 1px rgba(0,0,0,0.05);"></div>
<div style="position:absolute;left:1465.4px;top:466.8px;width:19.3px;height:19.3px;box-sizing:border-box;border:1px solid #b8b8b6;background:#6b6b00;box-shadow:inset 0 0 0 1px rgba(0,0,0,0.05);"></div>
<div style="position:absolute;left:1490.4px;top:466.8px;width:19.3px;height:19.3px;box-sizing:border-box;border:1px solid #b8b8b6;background:#c14a0a;box-shadow:inset 0 0 0 1px rgba(0,0,0,0.05);"></div>
<div style="position:absolute;left:1410.4px;top:491.7px;width:19.3px;height:19.3px;box-sizing:border-box;border:1px solid #b8b8b6;background:#ffffff;box-shadow:inset 0 0 0 1px rgba(0,0,0,0.05);"></div>
<div style="position:absolute;left:1440.4px;top:491.7px;width:19.3px;height:19.3px;box-sizing:border-box;border:1px solid #b8b8b6;background:#1e4615;box-shadow:inset 0 0 0 1px rgba(0,0,0,0.05);"></div>
<div style="position:absolute;left:1465.4px;top:491.7px;width:19.3px;height:19.3px;box-sizing:border-box;border:1px solid #b8b8b6;background:#30536d;box-shadow:inset 0 0 0 1px rgba(0,0,0,0.05);"></div>
<div style="position:absolute;left:1490.4px;top:491.7px;width:19.3px;height:19.3px;box-sizing:border-box;border:1px solid #b8b8b6;background:#c14a0a;box-shadow:inset 0 0 0 1px rgba(0,0,0,0.05);"></div>
<div style="position:absolute;left:1207px;top:528px;width:347px;height:42px;box-sizing:border-box;border:1px solid #d6cbc7;border-radius:7px;background:linear-gradient(180deg,#f4f4f2 0%,#f1eeed 50%,#efebea 100%);"></div>
<div style="position:absolute;left:1358.50px;top:541.00px;font-family:'Liberation Sans', sans-serif;font-size:18px;line-height:18px;color:#2e3436;font-weight:400;font-style:normal;white-space:pre;transform:scaleX(0.9771);transform-origin:0 0;will-change:transform;">Apply</div>
<div style="position:absolute;left:1207px;top:571px;width:347px;height:24px;background:#e6e7e5;"></div>
<svg style="position:absolute;left:1212px;top:576px" width="10" height="16" viewBox="0 0 10 16"><path d="M1 1 V15 L9 8 Z" fill="#2e3436"/></svg>
<div style="position:absolute;left:1227.00px;top:573.80px;font-family:'Liberation Sans', sans-serif;font-size:19px;line-height:19px;color:#2e3436;font-weight:700;font-style:normal;white-space:pre;transform:scaleX(0.9091);transform-origin:0 0;will-change:transform;">Style Presets</div>
<div style="position:absolute;left:1573px;top:200.0px;width:18px;height:2.6px;background:#2e3436;"></div>
<div style="position:absolute;left:1573px;top:206.5px;width:18px;height:2.6px;background:#2e3436;"></div>
<div style="position:absolute;left:1573px;top:213.0px;width:18px;height:2.6px;background:#2e3436;"></div>
<svg style="position:absolute;left:1568px;top:249px" width="27" height="27" viewBox="0 0 27 27"><rect x="1.5" y="1.5" width="24" height="23" rx="2" fill="#f7f7f6" stroke="#b9bab9"/><rect x="5" y="9" width="17" height="9" rx="4.5" fill="#4a90e2"/><circle cx="17.5" cy="13.5" r="3.5" fill="#fff"/></svg>
<svg style="position:absolute;left:1566px;top:298px" width="32" height="32" viewBox="0 0 32 32"><path d="M0.5 23 L9 1 H15.5 L24 23 H18.3 L16.6 18 H7.9 L6.2 23 Z M9.3 13.8 H15.2 L12.25 5 Z" fill="#4e5052"/><path d="M30 9 L19 24" stroke="#b5793b" stroke-width="3.5"/><path d="M19 24 L14 30 L21 27 Z" fill="#d45bd4"/></svg>
<svg style="position:absolute;left:1566px;top:353px" width="31" height="30" viewBox="0 0 31 30"><rect x="3" y="3" width="26" height="22" fill="#e6e8ea" stroke="#9fa3a6" transform="rotate(-5 16 14)"/><rect x="2.5" y="6.5" width="26" height="21" fill="#fff" stroke="#9fa3a6"/><rect x="5" y="9" width="21" height="16" fill="#5aa9e6"/><path d="M5 19 C10 17 16 20 26 18 V25 H5 Z" fill="#e9b36a"/><circle cx="11" cy="21" r="1.5" fill="#d94f2b"/></svg>
<svg style="position:absolute;left:1566px;top:405px" width="31" height="31" viewBox="0 0 31 31"><circle cx="15.5" cy="15.5" r="14" fill="#55595c"/><circle cx="15.5" cy="15.5" r="11" fill="#2f3b55" stroke="#8c9095" stroke-width="1.5"/><path d="M21 8 L17 17 L10 23 L14 14 Z" fill="#e04f3f"/><path d="M14 14 L17 17 L10 23 Z" fill="#d0d0d0"/></svg>
<svg style="position:absolute;left:1569px;top:456px" width="25" height="32" viewBox="0 0 25 32"><rect x="0.5" y="0.5" width="23" height="30" rx="1" fill="#efefee" stroke="#b9bab9"/></svg>
<div style="position:absolute;left:1560px;top:503px;width:44px;height:44px;background:#dfdbd8;border-radius:6px;"></div>
<svg style="position:absolute;left:1566px;top:508px" width="32" height="32" viewBox="0 0 32 32"><path d="M0.5 23 L9 1 H15.5 L24 23 H18.3 L16.6 18 H7.9 L6.2 23 Z M9.3 13.8 H15.2 L12.25 5 Z" fill="#4e5052"/><path d="M30 9 L19 24" stroke="#b5793b" stroke-width="3.5"/><path d="M19 24 L14 30 L21 27 Z" fill="#d45bd4"/></svg>
<svg style="position:absolute;left:1566px;top:562px" width="32" height="32" viewBox="0 0 32 32"><path d="M1 10 C6 3 15 2 22 8 C16 15 7 16 1 10 Z" fill="#f2f4f6" stroke="#8a8f94" stroke-width="1.2"/><circle cx="11" cy="9.5" r="4.5" fill="#3a7bd5"/><circle cx="11" cy="9.5" r="1.8" fill="#1d3f70"/><path d="M30 11 L19 26" stroke="#b5793b" stroke-width="3.5"/><path d="M19 26 L14 31 L21 28 Z" fill="#d45bd4"/></svg>
<svg style="position:absolute;left:1567px;top:616px" width="29" height="30" viewBox="0 0 29 30"><rect x="0.5" y="0.5" width="22" height="26" fill="#f8f8f8" stroke="#a9a9a9"/><path d="M4 6H17M4 10H12M4 14H16M4 18H10" stroke="#d9303c" stroke-width="1.4"/><path d="M27 8 L12 24 L9 28 L10 23 L25 6 Z" fill="#f2b33d" stroke="#555" stroke-width="0.8"/><path d="M24 5 L28 9" stroke="#e9799b" stroke-width="3"/></svg>
<svg style="position:absolute;left:1568px;top:669px" width="30" height="32" viewBox="0 0 30 32"><rect x="0.5" y="0.5" width="22" height="27" fill="#efefee" stroke="#b9bab9"/><circle cx="19" cy="21" r="9" fill="#3c8ce6"/><circle cx="19" cy="16" r="1.6" fill="#fff"/><path d="M14 18.5 H24 M19 18.5 V23 L16.5 27 M19 23 L21.5 27" stroke="#fff" stroke-width="1.5" fill="none"/></svg>
<div style="position:absolute;left:918.2px;top:642.8px;width:589.3px;height:547.7px;border-radius:16px;background:rgba(0,0,0,0.05);box-shadow:0 2px 6px 1px rgba(0,0,0,0.035);filter:blur(0.6px);"></div>
<div style="position:absolute;left:927.7px;top:649.3px;width:570.3px;height:529.7px;border-radius:8px 8px 0 0;box-shadow:0 0 0 1px rgba(0,0,0,0.10), 1px 1px 0 0 rgba(0,0,0,0.12);background:#f2f4f1;"></div>
<div style="position:absolute;left:927.7px;top:695.6px;width:570.3px;height:1px;background:#dcd3d3;"></div>
<div style="position:absolute;left:1183.80px;top:664.30px;font-family:'Liberation Sans', sans-serif;font-size:18px;line-height:18px;color:#8b8e8f;font-weight:700;font-style:normal;white-space:pre;transform:scaleX(0.9893);transform-origin:0 0;will-change:transform;">Theme</div>
<svg style="position:absolute;left:1469px;top:667px" width="13" height="12" viewBox="0 0 13 12"><path d="M1.8 1.8 L10.2 10.2 M10.2 1.8 L1.8 10.2" stroke="#838688" stroke-width="2.3" stroke-linecap="round"/></svg>
<div style="position:absolute;left:953.4px;top:722px;width:519.3px;height:331.5px;box-sizing:border-box;border:1px solid #dcd0d0;background:#f2f4f1;"></div>
<div style="position:absolute;left:954.8px;top:723.5px;width:171.2px;height:81.2px;box-sizing:border-box;border:5px solid #3584e4;background:#f2f4f1;"></div>
<div style="position:absolute;left:959.8px;top:728.5px;width:161.2px;height:17.5px;background:#bfc0bd;"></div>
<div style="position:absolute;left:1015.31px;top:728.20px;font-family:'Liberation Sans', sans-serif;font-size:18px;line-height:18px;color:#000;font-weight:400;font-style:normal;white-space:pre;letter-spacing:0.7px;will-change:transform;">Office</div>
<div style="position:absolute;left:982.8px;top:751.8px;width:19.3px;height:19.3px;box-sizing:border-box;border:1px solid #b8b8b6;background:#44546a;box-shadow:inset 0 0 0 1px rgba(0,0,0,0.05);"></div>
<div style="position:absolute;left:1012.8px;top:751.8px;width:19.3px;height:19.3px;box-sizing:border-box;border:1px solid #b8b8b6;background:#4472c4;box-shadow:inset 0 0 0 1px rgba(0,0,0,0.05);"></div>
<div style="position:absolute;left:1037.8px;top:751.8px;width:19.3px;height:19.3px;box-sizing:border-box;border:1px solid #b8b8b6;background:#a5a5a5;box-shadow:inset 0 0 0 1px rgba(0,0,0,0.05);"></div>
<div style="position:absolute;left:1062.8px;top:751.8px;width:19.3px;height:19.3px;box-sizing:border-box;border:1px solid #b8b8b6;background:#5b9bd5;box-shadow:inset 0 0 0 1px rgba(0,0,0,0.05);"></div>
<div style="position:absolute;left:982.8px;top:776.7px;width:19.3px;height:19.3px;box-sizing:border-box;border:1px solid #b8b8b6;background:#f0ecec;box-shadow:inset 0 0 0 1px rgba(0,0,0,0.05);"></div>
<div style="position:absolute;left:1012.8px;top:776.7px;width:19.3px;height:19.3px;box-sizing:border-box;border:1px solid #b8b8b6;background:#ed7d31;box-shadow:inset 0 0 0 1px rgba(0,0,0,0.05);"></div>
<div style="position:absolute;left:1037.8px;top:776.7px;width:19.3px;height:19.3px;box-sizing:border-box;border:1px solid #b8b8b6;background:#ffc000;box-shadow:inset 0 0 0 1px rgba(0,0,0,0.05);"></div>
<div style="position:absolute;left:1062.8px;top:776.7px;width:19.3px;height:19.3px;box-sizing:border-box;border:1px solid #b8b8b6;background:#70ad47;box-shadow:inset 0 0 0 1px rgba(0,0,0,0.05);"></div>
<div style="position:absolute;left:1128.4px;top:723.5px;width:168px;height:77.5px;box-sizing:border-box;border-top:2px solid #9c9d9b;border-left:3px solid #a3a4a2;border-right:2px solid #d2d3d1;border-bottom:2px solid #d2d3d1;background:#f2f4f1;box-shadow:1px 1px 0 #ffffff;"></div>
<div style="position:absolute;left:1131.4px;top:725.5px;width:163px;height:19.5px;background:#bfc0bd;"></div>
<div style="position:absolute;left:1165.04px;top:727.20px;font-family:'Liberation Sans', sans-serif;font-size:18px;line-height:18px;color:#000;font-weight:400;font-style:normal;white-space:pre;letter-spacing:0.7px;will-change:transform;">LibreOffice</div>
<div style="position:absolute;left:1156.4px;top:751.8px;width:19.3px;height:19.3px;box-sizing:border-box;border:1px solid #b8b8b6;background:#000000;box-shadow:inset 0 0 0 1px rgba(0,0,0,0.05);"></div>
<div style="position:absolute;left:1186.4px;top:751.8px;width:19.3px;height:19.3px;box-sizing:border-box;border:1px solid #b8b8b6;background:#00a500;box-shadow:inset 0 0 0 1px rgba(0,0,0,0.05);"></div>
<div style="position:absolute;left:1211.4px;top:751.8px;width:19.3px;height:19.3px;box-sizing:border-box;border:1px solid #b8b8b6;background:#a33e03;box-shadow:inset 0 0 0 1px rgba(0,0,0,0.05);"></div>
<div style="position:absolute;left:1236.4px;top:751.8px;width:19.3px;height:19.3px;box-sizing:border-box;border:1px solid #b8b8b6;background:#c99c00;box-shadow:inset 0 0 0 1px rgba(0,0,0,0.05);"></div>
<div style="position:absolute;left:1156.4px;top:776.7px;width:19.3px;height:19.3px;box-sizing:border-box;border:1px solid #b8b8b6;background:#ffffff;box-shadow:inset 0 0 0 1px rgba(0,0,0,0.05);"></div>
<div style="position:absolute;left:1186.4px;top:776.7px;width:19.3px;height:19.3px;box-sizing:border-box;border:1px solid #b8b8b6;background:#0369a3;box-shadow:inset 0 0 0 1px rgba(0,0,0,0.05);"></div>
<div style="position:absolute;left:1211.4px;top:776.7px;width:19.3px;height:19.3px;box-sizing:border-box;border:1px solid #b8b8b6;background:#8e03a3;box-shadow:inset 0 0 0 1px rgba(0,0,0,0.05);"></div>
<div style="position:absolute;left:1236.4px;top:776.7px;width:19.3px;height:19.3px;box-sizing:border-box;border:1px solid #b8b8b6;background:#c9211e;box-shadow:inset 0 0 0 1px rgba(0,0,0,0.05);"></div>
<div style="position:absolute;left:1301px;top:723.5px;width:168px;height:77.5px;box-sizing:border-box;border-top:2px solid #9c9d9b;border-left:3px solid #a3a4a2;border-right:2px solid #d2d3d1;border-bottom:2px solid #d2d3d1;background:#f2f4f1;box-shadow:1px 1px 0 #ffffff;"></div>
<div style="position:absolute;left:1304px;top:725.5px;width:163px;height:19.5px;background:#bfc0bd;"></div>
<div style="position:absolute;left:1346.87px;top:727.20px;font-family:'Liberation Sans', sans-serif;font-size:18px;line-height:18px;color:#000;font-weight:400;font-style:normal;white-space:pre;letter-spacing:0.7px;will-change:transform;">Rainbow</div>
<div style="position:absolute;left:1329px;top:751.8px;width:19.3px;height:19.3px;box-sizing:border-box;border:1px solid #b8b8b6;background:#1c1c1c;box-shadow:inset 0 0 0 1px rgba(0,0,0,0.05);"></div>
<div style="position:absolute;left:1359px;top:751.8px;width:19.3px;height:19.3px;box-sizing:border-box;border:1px solid #b8b8b6;background:#ff0000;box-shadow:inset 0 0 0 1px rgba(0,0,0,0.05);"></div>
<div style="position:absolute;left:1384px;top:751.8px;width:19.3px;height:19.3px;box-sizing:border-box;border:1px solid #b8b8b6;background:#ffff00;box-shadow:inset 0 0 0 1px rgba(0,0,0,0.05);"></div>
<div style="position:absolute;left:1409px;top:751.8px;width:19.3px;height:19.3px;box-sizing:border-box;border:1px solid #b8b8b6;background:#23629f;box-shadow:inset 0 0 0 1px rgba(0,0,0,0.05);"></div>
<div style="position:absolute;left:1329px;top:776.7px;width:19.3px;height:19.3px;box-sizing:border-box;border:1px solid #b8b8b6;background:#dcdcdc;box-shadow:inset 0 0 0 1px rgba(0,0,0,0.05);"></div>
<div style="position:absolute;left:1359px;top:776.7px;width:19.3px;height:19.3px;box-sizing:border-box;border:1px solid #b8b8b6;background:#ff8000;box-shadow:inset 0 0 0 1px rgba(0,0,0,0.05);"></div>
<div style="position:absolute;left:1384px;top:776.7px;width:19.3px;height:19.3px;box-sizing:border-box;border:1px solid #b8b8b6;background:#00a933;box-shadow:inset 0 0 0 1px rgba(0,0,0,0.05);"></div>
<div style="position:absolute;left:1409px;top:776.7px;width:19.3px;height:19.3px;box-sizing:border-box;border:1px solid #b8b8b6;background:#800080;box-shadow:inset 0 0 0 1px rgba(0,0,0,0.05);"></div>
<div style="position:absolute;left:955.2px;top:807px;width:168px;height:77.5px;box-sizing:border-box;border-top:2px solid #9c9d9b;border-left:3px solid #a3a4a2;border-right:2px solid #d2d3d1;border-bottom:2px solid #d2d3d1;background:#f2f4f1;box-shadow:1px 1px 0 #ffffff;"></div>
<div style="position:absolute;left:958.2px;top:809px;width:163px;height:19.5px;background:#bfc0bd;"></div>
<div style="position:absolute;left:1012.28px;top:810.70px;font-family:'Liberation Sans', sans-serif;font-size:18px;line-height:18px;color:#000;font-weight:400;font-style:normal;white-space:pre;letter-spacing:0.7px;will-change:transform;">Beach</div>
<div style="position:absolute;left:983.2px;top:835.3px;width:19.3px;height:19.3px;box-sizing:border-box;border:1px solid #b8b8b6;background:#ffbf00;box-shadow:inset 0 0 0 1px rgba(0,0,0,0.05);"></div>
<div style="position:absolute;left:1013.2px;top:835.3px;width:19.3px;height:19.3px;box-sizing:border-box;border:1px solid #b8b8b6;background:#fff5ce;box-shadow:inset 0 0 0 1px rgba(0,0,0,0.05);"></div>
<div style="position:absolute;left:1038.2px;top:835.3px;width:19.3px;height:19.3px;box-sizing:border-box;border:1px solid #b8b8b6;background:#e8f2a1;box-shadow:inset 0 0 0 1px rgba(0,0,0,0.05);"></div>
<div style="position:absolute;left:1063.2px;top:835.3px;width:19.3px;height:19.3px;box-sizing:border-box;border:1px solid #b8b8b6;background:#dfe6e0;box-shadow:inset 0 0 0 1px rgba(0,0,0,0.05);"></div>
<div style="position:absolute;left:983.2px;top:860.2px;width:19.3px;height:19.3px;box-sizing:border-box;border:1px solid #b8b8b6;background:#333333;box-shadow:inset 0 0 0 1px rgba(0,0,0,0.05);"></div>
<div style="position:absolute;left:1013.2px;top:860.2px;width:19.3px;height:19.3px;box-sizing:border-box;border:1px solid #b8b8b6;background:#dee6ef;box-shadow:inset 0 0 0 1px rgba(0,0,0,0.05);"></div>
<div style="position:absolute;left:1038.2px;top:860.2px;width:19.3px;height:19.3px;box-sizing:border-box;border:1px solid #b8b8b6;background:#ffd7d7;box-shadow:inset 0 0 0 1px rgba(0,0,0,0.05);"></div>
<div style="position:absolute;left:1063.2px;top:860.2px;width:19.3px;height:19.3px;box-sizing:border-box;border:1px solid #b8b8b6;background:#dddbb6;box-shadow:inset 0 0 0 1px rgba(0,0,0,0.05);"></div>
<div style="position:absolute;left:1128.4px;top:807px;width:168px;height:77.5px;box-sizing:border-box;border-top:2px solid #9c9d9b;border-left:3px solid #a3a4a2;border-right:2px solid #d2d3d1;border-bottom:2px solid #d2d3d1;background:#f2f4f1;box-shadow:1px 1px 0 #ffffff;"></div>
<div style="position:absolute;left:1131.4px;top:809px;width:163px;height:19.5px;background:#bfc0bd;"></div>
<div style="position:absolute;left:1182.63px;top:810.70px;font-family:'Liberation Sans', sans-serif;font-size:18px;line-height:18px;color:#000;font-weight:400;font-style:normal;white-space:pre;letter-spacing:0.7px;will-change:transform;">Sunset</div>
<div style="position:absolute;left:1156.4px;top:835.3px;width:19.3px;height:19.3px;box-sizing:border-box;border:1px solid #b8b8b6;background:#3a1b05;box-shadow:inset 0 0 0 1px rgba(0,0,0,0.05);"></div>
<div style="position:absolute;left:1186.4px;top:835.3px;width:19.3px;height:19.3px;box-sizing:border-box;border:1px solid #b8b8b6;background:#ffff00;box-shadow:inset 0 0 0 1px rgba(0,0,0,0.05);"></div>
<div style="position:absolute;left:1211.4px;top:835.3px;width:19.3px;height:19.3px;box-sizing:border-box;border:1px solid #b8b8b6;background:#ff8000;box-shadow:inset 0 0 0 1px rgba(0,0,0,0.05);"></div>
<div style="position:absolute;left:1236.4px;top:835.3px;width:19.3px;height:19.3px;box-sizing:border-box;border:1px solid #b8b8b6;background:#c9003e;box-shadow:inset 0 0 0 1px rgba(0,0,0,0.05);"></div>
<div style="position:absolute;left:1156.4px;top:860.2px;width:19.3px;height:19.3px;box-sizing:border-box;border:1px solid #b8b8b6;background:#f5f9d5;box-shadow:inset 0 0 0 1px rgba(0,0,0,0.05);"></div>
<div style="position:absolute;left:1186.4px;top:860.2px;width:19.3px;height:19.3px;box-sizing:border-box;border:1px solid #b8b8b6;background:#ffbf00;box-shadow:inset 0 0 0 1px rgba(0,0,0,0.05);"></div>
<div style="position:absolute;left:1211.4px;top:860.2px;width:19.3px;height:19.3px;box-sizing:border-box;border:1px solid #b8b8b6;background:#ff4000;box-shadow:inset 0 0 0 1px rgba(0,0,0,0.05);"></div>
<div style="position:absolute;left:1236.4px;top:860.2px;width:19.3px;height:19.3px;box-sizing:border-box;border:1px solid #b8b8b6;background:#800080;box-shadow:inset 0 0 0 1px rgba(0,0,0,0.05);"></div>
<div style="position:absolute;left:1301px;top:807px;width:168px;height:77.5px;box-sizing:border-box;border-top:2px solid #9c9d9b;border-left:3px solid #a3a4a2;border-right:2px solid #d2d3d1;border-bottom:2px solid #d2d3d1;background:#f2f4f1;box-shadow:1px 1px 0 #ffffff;"></div>
<div style="position:absolute;left:1304px;top:809px;width:163px;height:19.5px;background:#bfc0bd;"></div>
<div style="position:absolute;left:1357.58px;top:810.70px;font-family:'Liberation Sans', sans-serif;font-size:18px;line-height:18px;color:#000;font-weight:400;font-style:normal;white-space:pre;letter-spacing:0.7px;will-change:transform;">Ocean</div>
<div style="position:absolute;left:1329px;top:835.3px;width:19.3px;height:19.3px;box-sizing:border-box;border:1px solid #b8b8b6;background:#23629f;box-shadow:inset 0 0 0 1px rgba(0,0,0,0.05);"></div>
<div style="position:absolute;left:1359px;top:835.3px;width:19.3px;height:19.3px;box-sizing:border-box;border:1px solid #b8b8b6;background:#800080;box-shadow:inset 0 0 0 1px rgba(0,0,0,0.05);"></div>
<div style="position:absolute;left:1384px;top:835.3px;width:19.3px;height:19.3px;box-sizing:border-box;border:1px solid #b8b8b6;background:#23629f;box-shadow:inset 0 0 0 1px rgba(0,0,0,0.05);"></div>
<div style="position:absolute;left:1409px;top:835.3px;width:19.3px;height:19.3px;box-sizing:border-box;border:1px solid #b8b8b6;background:#00a933;box-shadow:inset 0 0 0 1px rgba(0,0,0,0.05);"></div>
<div style="position:absolute;left:1329px;top:860.2px;width:19.3px;height:19.3px;box-sizing:border-box;border:1px solid #b8b8b6;background:#cccccc;box-shadow:inset 0 0 0 1px rgba(0,0,0,0.05);"></div>
<div style="position:absolute;left:1359px;top:860.2px;width:19.3px;height:19.3px;box-sizing:border-box;border:1px solid #b8b8b6;background:#55308d;box-shadow:inset 0 0 0 1px rgba(0,0,0,0.05);"></div>
<div style="position:absolute;left:1384px;top:860.2px;width:19.3px;height:19.3px;box-sizing:border-box;border:1px solid #b8b8b6;background:#168253;box-shadow:inset 0 0 0 1px rgba(0,0,0,0.05);"></div>
<div style="position:absolute;left:1409px;top:860.2px;width:19.3px;height:19.3px;box-sizing:border-box;border:1px solid #b8b8b6;background:#81d41a;box-shadow:inset 0 0 0 1px rgba(0,0,0,0.05);"></div>
<div style="position:absolute;left:955.2px;top:889.5px;width:168px;height:77.5px;box-sizing:border-box;border-top:2px solid #9c9d9b;border-left:3px solid #a3a4a2;border-right:2px solid #d2d3d1;border-bottom:2px solid #d2d3d1;background:#f2f4f1;box-shadow:1px 1px 0 #ffffff;"></div>
<div style="position:absolute;left:958.2px;top:891.5px;width:163px;height:19.5px;background:#bfc0bd;"></div>
<div style="position:absolute;left:1011.44px;top:893.20px;font-family:'Liberation Sans', sans-serif;font-size:18px;line-height:18px;color:#000;font-weight:400;font-style:normal;white-space:pre;letter-spacing:0.7px;will-change:transform;">Forest</div>
<div style="position:absolute;left:983.2px;top:917.8px;width:19.3px;height:19.3px;box-sizing:border-box;border:1px solid #b8b8b6;background:#000000;box-shadow:inset 0 0 0 1px rgba(0,0,0,0.05);"></div>
<div style="position:absolute;left:1013.2px;top:917.8px;width:19.3px;height:19.3px;box-sizing:border-box;border:1px solid #b8b8b6;background:#7f3b05;box-shadow:inset 0 0 0 1px rgba(0,0,0,0.05);"></div>
<div style="position:absolute;left:1038.2px;top:917.8px;width:19.3px;height:19.3px;box-sizing:border-box;border:1px solid #b8b8b6;background:#6b6b00;box-shadow:inset 0 0 0 1px rgba(0,0,0,0.05);"></div>
<div style="position:absolute;left:1063.2px;top:917.8px;width:19.3px;height:19.3px;box-sizing:border-box;border:1px solid #b8b8b6;background:#c14a0a;box-shadow:inset 0 0 0 1px rgba(0,0,0,0.05);"></div>
<div style="position:absolute;left:983.2px;top:942.7px;width:19.3px;height:19.3px;box-sizing:border-box;border:1px solid #b8b8b6;background:#ffffff;box-shadow:inset 0 0 0 1px rgba(0,0,0,0.05);"></div>
<div style="position:absolute;left:1013.2px;top:942.7px;width:19.3px;height:19.3px;box-sizing:border-box;border:1px solid #b8b8b6;background:#1e4615;box-shadow:inset 0 0 0 1px rgba(0,0,0,0.05);"></div>
<div style="position:absolute;left:1038.2px;top:942.7px;width:19.3px;height:19.3px;box-sizing:border-box;border:1px solid #b8b8b6;background:#30536d;box-shadow:inset 0 0 0 1px rgba(0,0,0,0.05);"></div>
<div style="position:absolute;left:1063.2px;top:942.7px;width:19.3px;height:19.3px;box-sizing:border-box;border:1px solid #b8b8b6;background:#c14a0a;box-shadow:inset 0 0 0 1px rgba(0,0,0,0.05);"></div>
<div style="position:absolute;left:1128.4px;top:889.5px;width:168px;height:77.5px;box-sizing:border-box;border-top:2px solid #9c9d9b;border-left:3px solid #a3a4a2;border-right:2px solid #d2d3d1;border-bottom:2px solid #d2d3d1;background:#f2f4f1;box-shadow:1px 1px 0 #ffffff;"></div>
<div style="position:absolute;left:1131.4px;top:891.5px;width:163px;height:19.5px;background:#bfc0bd;"></div>
<div style="position:absolute;left:1181.64px;top:893.20px;font-family:'Liberation Sans', sans-serif;font-size:18px;line-height:18px;color:#000;font-weight:400;font-style:normal;white-space:pre;letter-spacing:0.7px;will-change:transform;">Breeze</div>
<div style="position:absolute;left:1156.4px;top:917.8px;width:19.3px;height:19.3px;box-sizing:border-box;border:1px solid #b8b8b6;background:#31363b;box-shadow:inset 0 0 0 1px rgba(0,0,0,0.05);"></div>
<div style="position:absolute;left:1186.4px;top:917.8px;width:19.3px;height:19.3px;box-sizing:border-box;border:1px solid #b8b8b6;background:#da4453;box-shadow:inset 0 0 0 1px rgba(0,0,0,0.05);"></div>
<div style="position:absolute;left:1211.4px;top:917.8px;width:19.3px;height:19.3px;box-sizing:border-box;border:1px solid #b8b8b6;background:#fdbc4b;box-shadow:inset 0 0 0 1px rgba(0,0,0,0.05);"></div>
<div style="position:absolute;left:1236.4px;top:917.8px;width:19.3px;height:19.3px;box-sizing:border-box;border:1px solid #b8b8b6;background:#1cdc9a;box-shadow:inset 0 0 0 1px rgba(0,0,0,0.05);"></div>
<div style="position:absolute;left:1156.4px;top:942.7px;width:19.3px;height:19.3px;box-sizing:border-box;border:1px solid #b8b8b6;background:#eff0f1;box-shadow:inset 0 0 0 1px rgba(0,0,0,0.05);"></div>
<div style="position:absolute;left:1186.4px;top:942.7px;width:19.3px;height:19.3px;box-sizing:border-box;border:1px solid #b8b8b6;background:#f67b55;box-shadow:inset 0 0 0 1px rgba(0,0,0,0.05);"></div>
<div style="position:absolute;left:1211.4px;top:942.7px;width:19.3px;height:19.3px;box-sizing:border-box;border:1px solid #b8b8b6;background:#c9ce3b;box-shadow:inset 0 0 0 1px rgba(0,0,0,0.05);"></div>
<div style="position:absolute;left:1236.4px;top:942.7px;width:19.3px;height:19.3px;box-sizing:border-box;border:1px solid #b8b8b6;background:#2ecc71;box-shadow:inset 0 0 0 1px rgba(0,0,0,0.05);"></div>
<div style="position:absolute;left:938.2px;top:1069px;width:105.39999999999986px;height:42px;box-sizing:border-box;border:1px solid #d9cfcf;border-radius:7px;background:#f2f4f1;"></div>
<div style="position:absolute;left:975.40px;top:1081.00px;font-family:'Liberation Sans', sans-serif;font-size:18px;line-height:18px;color:#8b8e8f;font-weight:400;font-style:normal;white-space:pre;will-change:transform;">Add</div>
<div style="position:absolute;left:938.2px;top:1127.4px;width:106.39999999999986px;height:41.59999999999991px;box-sizing:border-box;border:1px solid #d9cfcf;border-radius:7px;background:#f2f4f1;"></div>
<div style="position:absolute;left:972.93px;top:1139.20px;font-family:'Liberation Sans', sans-serif;font-size:18px;line-height:18px;color:#8b8e8f;font-weight:400;font-style:normal;white-space:pre;transform:scaleX(0.9717);transform-origin:0 0;will-change:transform;">Help</div>
<div style="position:absolute;left:1268.2px;top:1127.4px;width:106.59999999999991px;height:41.59999999999991px;box-sizing:border-box;border:1px solid #d9cfcf;border-radius:7px;background:#f2f4f1;"></div>
<div style="position:absolute;left:1294.50px;top:1139.20px;font-family:'Liberation Sans', sans-serif;font-size:18px;line-height:18px;color:#8b8e8f;font-weight:400;font-style:normal;white-space:pre;transform:scaleX(0.9812);transform-origin:0 0;will-change:transform;">Cancel</div>
<div style="position:absolute;left:1381px;top:1127.4px;width:106.59999999999991px;height:41.59999999999991px;box-sizing:border-box;border:1px solid #d9cfcf;border-radius:7px;background:#f2f4f1;"></div>
<div style="position:absolute;left:1421.30px;top:1139.20px;font-family:'Liberation Sans', sans-serif;font-size:18px;line-height:18px;color:#8b8e8f;font-weight:400;font-style:normal;white-space:pre;will-change:transform;">OK</div>
<div style="position:absolute;left:7px;top:1243px;width:1610px;height:29px;background:#f2f4f1;"></div>
<svg style="position:absolute;left:19px;top:1245px" width="20" height="23" viewBox="0 0 20 23"><defs><linearGradient id="cbg" x1="0" y1="0" x2="0" y2="1"><stop offset="0" stop-color="#fbfbfb"/><stop offset="1" stop-color="#dcdddc"/></linearGradient></defs><rect x="1.5" y="2.5" width="14" height="19" fill="url(#cbg)" stroke="#a2a3a2"/><path d="M5 9 L9 13 L17 3" stroke="#8a8b8b" stroke-width="3.2" fill="none"/></svg>
<div style="position:absolute;left:46px;top:1248px;width:1px;height:20px;background:#d6d7d5;"></div>
<div style="position:absolute;left:200px;top:1248px;width:1px;height:20px;background:#d6d7d5;"></div>
<div style="position:absolute;left:471px;top:1248px;width:1px;height:20px;background:#d6d7d5;"></div>
<div style="position:absolute;left:527px;top:1248px;width:1px;height:20px;background:#d6d7d5;"></div>
<div style="position:absolute;left:684px;top:1248px;width:1px;height:20px;background:#d6d7d5;"></div>
<div style="position:absolute;left:804px;top:1248px;width:1px;height:20px;background:#d6d7d5;"></div>
<div style="position:absolute;left:889px;top:1248px;width:1px;height:20px;background:#d6d7d5;"></div>
<div style="position:absolute;left:945px;top:1248px;width:1px;height:20px;background:#d6d7d5;"></div>
<div style="position:absolute;left:981px;top:1248px;width:1px;height:20px;background:#d6d7d5;"></div>
<div style="position:absolute;left:1269px;top:1248px;width:1px;height:20px;background:#d6d7d5;"></div>
<div style="position:absolute;left:1378px;top:1248px;width:1px;height:20px;background:#d6d7d5;"></div>
<div style="position:absolute;left:1557px;top:1248px;width:1px;height:20px;background:#d6d7d5;"></div>
<div style="position:absolute;left:55.43px;top:1252.00px;font-family:'Liberation Sans', sans-serif;font-size:14.5px;line-height:14.5px;color:#2e3436;font-weight:400;font-style:normal;white-space:pre;transform:scaleX(0.9684);transform-origin:0 0;will-change:transform;">Page 1 of 2</div>
<div style="position:absolute;left:211.30px;top:1252.00px;font-family:'Liberation Sans', sans-serif;font-size:14.5px;line-height:14.5px;color:#2e3436;font-weight:400;font-style:normal;white-space:pre;transform:scaleX(1.0557);transform-origin:0 0;will-change:transform;">399 words, 3,068 characters</div>
<svg style="position:absolute;left:489px;top:1247px" width="22" height="22" viewBox="0 0 22 22"><circle cx="9" cy="3" r="2.2" fill="none" stroke="#444" stroke-width="1.4"/><path d="M2 7 H16 M9 7 V13 L6 20 M9 13 L12 20" stroke="#444" stroke-width="1.6" fill="none"/><path d="M12 13 L20 21 M20 13 L12 21" stroke="#e0383e" stroke-width="1.8"/></svg>
<div style="position:absolute;left:536.68px;top:1252.00px;font-family:'Liberation Sans', sans-serif;font-size:14.5px;line-height:14.5px;color:#2e3436;font-weight:400;font-style:normal;white-space:pre;transform:scaleX(1.0173);transform-origin:0 0;will-change:transform;">Default Page Style</div>
<div style="position:absolute;left:703.37px;top:1252.00px;font-family:'Liberation Sans', sans-serif;font-size:14.5px;line-height:14.5px;color:#2e3436;font-weight:400;font-style:normal;white-space:pre;transform:scaleX(1.0256);transform-origin:0 0;will-change:transform;">English (UK)</div>
<svg style="position:absolute;left:903px;top:1247px" width="30" height="22" viewBox="0 0 30 22"><path d="M2 2 H10 M6 2 V19 M2 19 H10" stroke="#555" stroke-width="2" fill="none"/><path d="M12 14 V19 H28 V14" stroke="#666" stroke-width="1.6" fill="none"/></svg>
<svg style="position:absolute;left:1279px;top:1247px" width="18" height="22" viewBox="0 0 18 22"><path d="M1.5 1.5 H15.5 V15 L11 20.5 H1.5 Z" fill="#f0853a" stroke="#d6631c"/><path d="M11 20.5 V15 H15.5" fill="#fff" stroke="#d6631c"/></svg>
<svg style="position:absolute;left:1302px;top:1247px" width="34" height="22" viewBox="0 0 34 22"><path d="M1.5 1.5 H14.5 V15 L10 20.5 H1.5 Z" fill="#eceded" stroke="#a9aaa9"/><path d="M17.5 1.5 H30.5 V15 L26 20.5 H17.5 Z" fill="#eceded" stroke="#a9aaa9"/></svg>
<svg style="position:absolute;left:1341px;top:1247px" width="34" height="22" viewBox="0 0 34 22"><path d="M1.5 1.5 H14.5 V20.5 H6 L1.5 15 Z" fill="#eceded" stroke="#a9aaa9"/><path d="M16.5 1.5 H29.5 V15 L25 20.5 H16.5 Z" fill="#eceded" stroke="#a9aaa9"/></svg>
<svg style="position:absolute;left:1387px;top:1250px" width="18" height="18" viewBox="0 0 18 18"><circle cx="9" cy="9" r="7" fill="none" stroke="#4b4e50" stroke-width="1.4"/><path d="M5 9 H13" stroke="#4b4e50" stroke-width="1.4"/></svg>
<div style="position:absolute;left:1409px;top:1258px;width:122px;height:2px;background:#9a9c9b;"></div>
<div style="position:absolute;left:1445.5px;top:1254px;width:2px;height:9px;background:#7d7f80;"></div>
<svg style="position:absolute;left:1461px;top:1251px" width="15" height="15" viewBox="0 0 15 15"><circle cx="7.5" cy="7.5" r="6" fill="#e8e8e7" stroke="#6d7072" stroke-width="1.2"/><path d="M7.5 3 V12 M3 7.5 H12" stroke="#b0b2b3"/></svg>
<svg style="position:absolute;left:1535px;top:1250px" width="18" height="18" viewBox="0 0 18 18"><circle cx="9" cy="9" r="7" fill="none" stroke="#4b4e50" stroke-width="1.4"/><path d="M5 9 H13 M9 5 V13" stroke="#4b4e50" stroke-width="1.4"/></svg>
<div style="position:absolute;left:1569.80px;top:1252.00px;font-family:'Liberation Sans', sans-serif;font-size:14.5px;line-height:14.5px;color:#2e3436;font-weight:400;font-style:normal;white-space:pre;transform:scaleX(1.0364);transform-origin:0 0;will-change:transform;">99%</div>
</body></html>
